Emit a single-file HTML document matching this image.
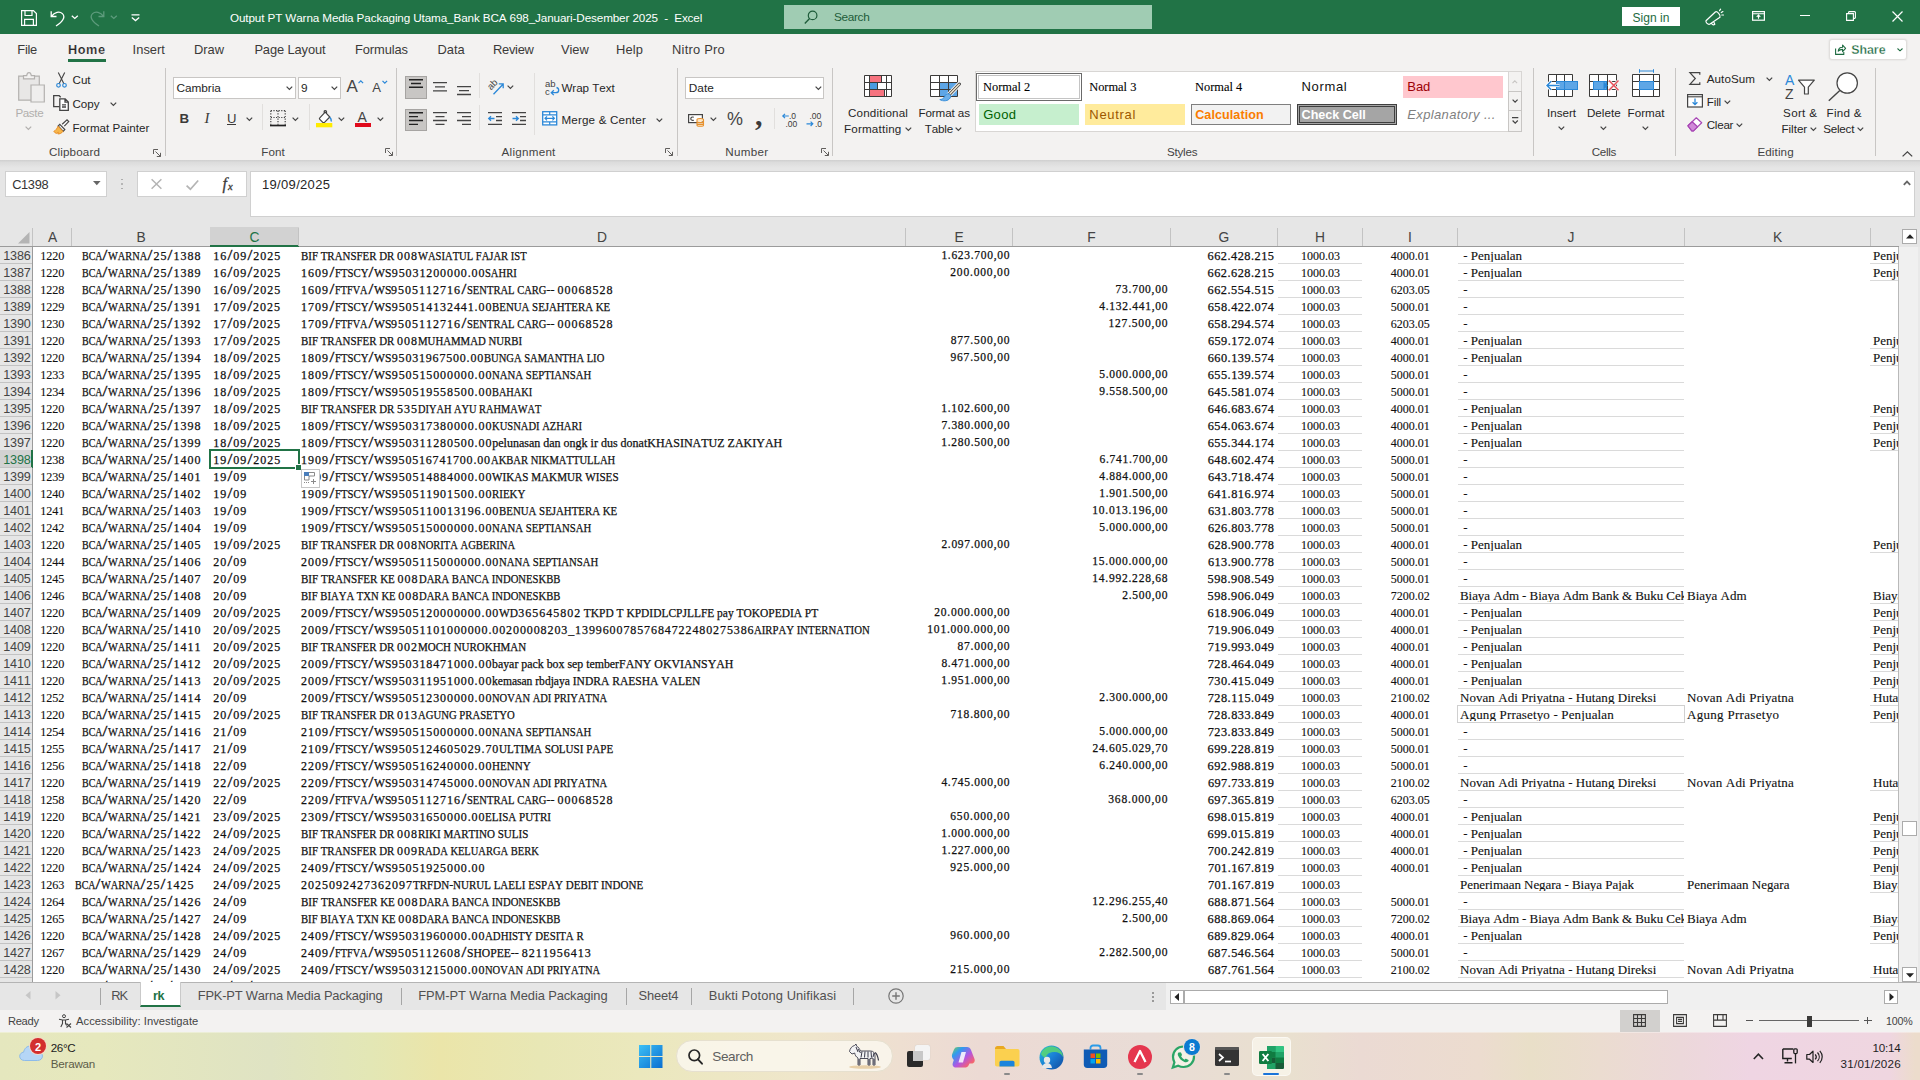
<!DOCTYPE html><html lang="en"><head><meta charset="utf-8"><title>Excel</title><style>
*{margin:0;padding:0;box-sizing:border-box}
html,body{width:1920px;height:1080px;overflow:hidden;background:#e6e6e6}
body{position:relative;font-family:"Liberation Sans",sans-serif;font-size:12px;color:#262626;font-kerning:none}
div,span,svg{position:absolute}
svg{overflow:visible}
span{white-space:pre;display:block}
i{font-style:normal}
b{font-weight:400;display:inline-block;text-align:center;transform:scale(1.45,1.28);transform-origin:50% 80%}
u{text-decoration:none;display:inline-block;transform-origin:0 50%}
#grid{left:0;top:247px;width:1899px;height:735px;background:#fff;overflow:hidden}
#grid span{font-family:"Liberation Serif",serif;color:#111;-webkit-text-stroke:0.25px #111}
#grid span.rh{font-family:"Liberation Sans",sans-serif;color:#444;-webkit-text-stroke:0}
#grid span.a{-webkit-text-stroke:0.1px #111}
#grid span.t{-webkit-text-stroke:0.12px #111}
.gl{background:#dadada;height:1px}
</style></head><body>
<div id="titlebar" style="left:0;top:0;width:1920px;height:34px;background:#217346">
<svg style="left:21px;top:10px;" width="16" height="16" viewBox="0 0 16 16"><path d="M.6.6h11.8l3 3v11.8H.6z M4 .6v4.9h7v-4.9 M3.6 15.4v-6h8.8v6" fill="none" stroke="#fff" stroke-width="1.2"/></svg>
<svg style="left:50px;top:9.5px;" width="16" height="17" viewBox="0 0 16 17"><path d="M1.2 1.2v5.3h5.3 M1.6 6.2C4.5 2 9.5.8 12.4 3.6c3.3 3.2.8 7.800-6.400 12.400" fill="none" stroke="#fff" stroke-width="1.3"/></svg>
<svg style="left:71px;top:15px;" width="8" height="5" viewBox="0 0 8 5"><path d="M.8.8l3 2.700 3-2.700" fill="none" stroke="#fff" stroke-width="1.3"/></svg>
<svg style="left:89px;top:9.5px;" width="16" height="17" viewBox="0 0 16 17"><path d="M14.800 1.2v5.3H9.500 M14.400 6.200C11.500 2 6.500.8 3.600 3.600.3 6.800 2.800 11.400 10 16" fill="none" stroke="#5d9b7c" stroke-width="1.3"/></svg>
<svg style="left:110px;top:15px;" width="8" height="5" viewBox="0 0 8 5"><path d="M.8.8l3 2.700 3-2.700" fill="none" stroke="#5d9b7c" stroke-width="1.3"/></svg>
<svg style="left:131px;top:13.5px;" width="9" height="8" viewBox="0 0 9 8"><path d="M.5.800h8 M.8 3.600l3.700 3 3.700-3" fill="none" stroke="#fff" stroke-width="1.3"/></svg>
<span style="left:230.0px;top:12.00px;font-size:11.7px;line-height:11.7px;letter-spacing:-0.12px;color:#fff;">Output PT Warna Media Packaging Utama_Bank BCA 698_Januari-Desember 2025  -  Excel</span>
<div style="left:784px;top:5px;width:368px;height:24px;background:#a0ccb3;"></div>
<svg style="left:804px;top:10px;" width="14" height="14" viewBox="0 0 14 14"><circle cx="8.600" cy="5.400" r="4.300" fill="none" stroke="#1e5c3a" stroke-width="1.2"/><path d="M5.600 8.600L.8 13.400" stroke="#1e5c3a" stroke-width="1.400"/></svg>
<span style="left:834.0px;top:12.00px;font-size:11.834px;line-height:11.834px;letter-spacing:-0.34px;color:#1e5c3a;">Search</span>
<div style="left:1622px;top:7px;width:58px;height:19px;background:#fff;"></div>
<span style="left:1632.6px;top:12.00px;font-size:12.028px;line-height:12.028px;letter-spacing:0.01px;color:#1e6b41;">Sign in</span>
<svg style="left:1705px;top:9px;" width="19" height="17" viewBox="0 0 19 17"><path d="M1 11.800L10.300 3C12 1.800 16 6 15 8.300L4.600 15.200C3 15.800.4 13.400 1 11.800z M6.600 14.200c.3 1.700 2 2.100 3.200 1.100l-.9-2 M14.600 1.700l1-1.500 M16.300 3.600l1.600-1 M16.800 6h1.700" fill="none" stroke="#fff" stroke-width="1.200" stroke-linejoin="round" stroke-linecap="round"/></svg>
<svg style="left:1752px;top:11.3px;" width="13" height="10" viewBox="0 0 13 10"><rect x=".6" y=".6" width="11.800" height="8.600" fill="none" stroke="#fff" stroke-width="1.2"/><path d="M.6 2.800h11.800 M6.500 7.800V4.200 M4.700 5.800l1.800-1.800 1.800 1.800" fill="none" stroke="#fff" stroke-width="1.100"/></svg>
<div style="left:1800px;top:15px;width:10px;height:1.3px;background:#fff;"></div>
<svg style="left:1846px;top:10.8px;" width="10" height="10" viewBox="0 0 10 10"><path d="M.6 2.600h6.800v6.800H.6z M2.600 2.600V1.400a.8.800 0 0 1 .8-.8h5.200a.8.800 0 0 1 .8.800v5.200a.8.800 0 0 1-.8.800H7.400" fill="none" stroke="#fff" stroke-width="1.100"/></svg>
<svg style="left:1891.5px;top:11.3px;" width="11" height="11" viewBox="0 0 11 11"><path d="M.5.500l10 10 M10.500.5l-10 10" stroke="#fff" stroke-width="1.200"/></svg>
</div>
<div id="tabs" style="left:0;top:34px;width:1920px;height:32px;background:#f3f2f1">
<span style="left:17.3px;top:10.00px;font-size:12.901px;line-height:12.901px;letter-spacing:-0.29px;color:#3b3a39;">File</span>
<span style="left:68.0px;top:10.00px;font-size:12.7px;line-height:12.7px;letter-spacing:0.58px;font-weight:700;color:#262626;-webkit-text-stroke:.2px #f3f2f1;">Home</span>
<span style="left:132.6px;top:10.00px;font-size:12.901px;line-height:12.901px;letter-spacing:0.02px;color:#3b3a39;">Insert</span>
<span style="left:194.0px;top:10.00px;font-size:12.901px;line-height:12.901px;letter-spacing:-0.03px;color:#3b3a39;">Draw</span>
<span style="left:254.4px;top:10.00px;font-size:12.901px;line-height:12.901px;letter-spacing:-0.12px;color:#3b3a39;">Page Layout</span>
<span style="left:355.0px;top:10.00px;font-size:12.901px;line-height:12.901px;letter-spacing:-0.11px;color:#3b3a39;">Formulas</span>
<span style="left:437.5px;top:10.00px;font-size:12.901px;line-height:12.901px;letter-spacing:-0.05px;color:#3b3a39;">Data</span>
<span style="left:493.0px;top:10.00px;font-size:12.901px;line-height:12.901px;letter-spacing:-0.29px;color:#3b3a39;">Review</span>
<span style="left:561.0px;top:10.00px;font-size:12.901px;line-height:12.901px;letter-spacing:-0.06px;color:#3b3a39;">View</span>
<span style="left:616.0px;top:10.00px;font-size:12.901px;line-height:12.901px;letter-spacing:0.14px;color:#3b3a39;">Help</span>
<span style="left:672.0px;top:10.00px;font-size:12.901px;line-height:12.901px;letter-spacing:0.23px;color:#3b3a39;">Nitro Pro</span>
<div style="left:68px;top:24.7px;width:38px;height:3px;background:#217346;"></div>
<div style="left:1828.5px;top:4.7px;width:78.5px;height:21.3px;background:#fff;border:1px solid #e1dfdd;border-radius:3px;box-shadow:0 0 2px rgba(0,0,0,.12)"></div>
<svg style="left:1835px;top:10px;" width="11" height="11" viewBox="0 0 11 11"><path d="M.6 4.500v5.900h8.200V8 M3.200 7.200c.3-2.500 2-3.900 4.400-3.900V1l3 3.300-3 3.300V5.400c-1.900 0-3.300.5-4.400 1.800z" fill="none" stroke="#1e6b41" stroke-width="1.100" stroke-linejoin="round"/></svg>
<span style="left:1851.3px;top:10.00px;font-size:12.4px;line-height:12.4px;letter-spacing:-0.05px;font-weight:700;color:#1e6b41;-webkit-text-stroke:.3px #fff;">Share</span>
<svg style="left:1896.5px;top:14px;" width="6" height="4" viewBox="0 0 6 4"><path d="M.5.500l2.500 2.300L5.500.5" fill="none" stroke="#1e6b41" stroke-width="1.100"/></svg>
</div>
<div id="ribbon" style="left:0;top:66px;width:1920px;height:94px;background:#f3f2f1">
<div style="left:164.5px;top:2px;width:1px;height:88px;background:#c8c6c4;"></div>
<div style="left:396.3px;top:2px;width:1px;height:88px;background:#c8c6c4;"></div>
<div style="left:676.7px;top:2px;width:1px;height:88px;background:#c8c6c4;"></div>
<div style="left:832.3px;top:2px;width:1px;height:88px;background:#c8c6c4;"></div>
<div style="left:1532.5px;top:2px;width:1px;height:88px;background:#c8c6c4;"></div>
<div style="left:1675.4px;top:2px;width:1px;height:88px;background:#c8c6c4;"></div>
<div style="left:1875.3px;top:2px;width:1px;height:88px;background:#c8c6c4;"></div>
<div style="left:262px;top:38px;width:1px;height:26px;background:#e1dfdd;"></div>
<div style="left:308.8px;top:38px;width:1px;height:26px;background:#e1dfdd;"></div>
<div style="left:479.4px;top:7px;width:1px;height:25px;background:#e1dfdd;"></div>
<div style="left:479.4px;top:39px;width:1px;height:25px;background:#e1dfdd;"></div>
<div style="left:534.2px;top:7px;width:1px;height:62px;background:#e1dfdd;"></div>
<div style="left:774.4px;top:42px;width:1px;height:21px;background:#e1dfdd;"></div>
<svg style="left:18px;top:5.5px;" width="27" height="31" viewBox="0 0 27 31"><path d="M.7 4.200h20.600v24H.7z" fill="#e8e7e6" stroke="#b3b1af" stroke-width="1.200"/><path d="M5.500 6.800V3.600h3.200C9 1.800 9.900.700 11 .7s2 1.100 2.300 2.900h3.200v3.200z" fill="#f3f2f1" stroke="#b3b1af" stroke-width="1.200"/><path d="M13 13h13.300v17H13z" fill="#efeeed" stroke="#b3b1af" stroke-width="1.200"/></svg>
<span style="left:15.4px;top:41.00px;font-size:11.64px;line-height:11.64px;letter-spacing:-0.37px;color:#b1afad;">Paste</span>
<svg style="left:25px;top:60px;" width="6.8" height="4" viewBox="0 0 6.8 4"><path d="M.6.6l2.8 2.8 2.8-2.8" fill="none" stroke="#b1afad" stroke-width="1.2"/></svg>
<svg style="left:56px;top:5.5px;" width="11" height="16" viewBox="0 0 11 16"><path d="M2.300.4l5.600 11.300 M8.700.4L3.100 11.700" stroke="#444" stroke-width="1.100" fill="none"/><circle cx="2.500" cy="13.300" r="1.800" fill="none" stroke="#2b88d8" stroke-width="1.200"/><circle cx="8.500" cy="13.300" r="1.800" fill="none" stroke="#2b88d8" stroke-width="1.200"/></svg>
<span style="left:72.5px;top:8.00px;font-size:11.64px;line-height:11.64px;letter-spacing:-0.02px;">Cut</span>
<svg style="left:53px;top:29.3px;" width="16" height="16" viewBox="0 0 16 16"><path d="M6.600 11.600H.7V.700h5.500l1.500 1.500" fill="none" stroke="#444" stroke-width="1.300"/><path d="M6.800 3.800h5.400l3.100 3.100v8.400H6.800z M12 3.900v3.200h3.200 M9 9.800h4 M9 12h4" fill="#fff" stroke="#444" stroke-width="1.300"/></svg>
<span style="left:72.5px;top:32.00px;font-size:11.64px;line-height:11.64px;letter-spacing:-0.04px;">Copy</span>
<svg style="left:110.1px;top:35.6px;" width="6.8" height="4" viewBox="0 0 6.8 4"><path d="M.6.6l2.8 2.8 2.8-2.8" fill="none" stroke="#444" stroke-width="1.2"/></svg>
<svg style="left:53px;top:53px;" width="17" height="16" viewBox="0 0 17 16"><path d="M9.200 5.200L14 .8l1.700 1.800-4.400 4.600" fill="#fff" stroke="#444" stroke-width="1.200"/><path d="M6.800 5.400l5 5.200-1.600 1.700-5-5.300z" fill="#fff" stroke="#444" stroke-width="1.200"/><path d="M5 7.200l5 5.200c-1.500 2-3.600 2.700-5.200 2.500l.6-1.700-2 1.200c-1.200-.4-2-1.100-2.600-2 2-1 3.300-2.800 4.200-5.200z" fill="#f7b64a" stroke="#e8912d" stroke-width="1"/></svg>
<span style="left:72.5px;top:56.00px;font-size:11.64px;line-height:11.64px;">Format Painter</span>
<span style="left:49.0px;top:80.00px;font-size:11.64px;line-height:11.64px;letter-spacing:0.14px;color:#444;">Clipboard</span>
<svg style="left:153px;top:82.5px;" width="8" height="8" viewBox="0 0 8 8"><path d="M.5 5V.5H5 M2.500 2.500l5 5 M7.500 3.800v3.700H3.800" fill="none" stroke="#605e5c" stroke-width="1"/></svg>
<div style="left:173px;top:10.5px;width:123px;height:22px;background:#fff;border:1px solid #c8c6c4;"></div>
<span style="left:176.5px;top:17.00px;font-size:11.834px;line-height:11.834px;letter-spacing:-0.06px;">Cambria</span>
<svg style="left:285.8px;top:20.3px;" width="6.8" height="4" viewBox="0 0 6.8 4"><path d="M.6.6l2.8 2.8 2.8-2.8" fill="none" stroke="#444" stroke-width="1.2"/></svg>
<div style="left:298.4px;top:10.5px;width:42.2px;height:22px;background:#fff;border:1px solid #c8c6c4;"></div>
<span style="left:301.0px;top:17.00px;font-size:11.834px;line-height:11.834px;letter-spacing:-0.08px;">9</span>
<svg style="left:330.9px;top:20.3px;" width="6.8" height="4" viewBox="0 0 6.8 4"><path d="M.6.6l2.8 2.8 2.8-2.8" fill="none" stroke="#444" stroke-width="1.2"/></svg>
<span style="left:346.5px;top:13.00px;font-size:16.975px;line-height:16.975px;letter-spacing:-0.17px;color:#444;">A</span>
<svg style="left:357.5px;top:14px;" width="6" height="4" viewBox="0 0 6 4"><path d="M.5 3.200L2.800.8l2.300 2.400" fill="none" stroke="#2b88d8" stroke-width="1.200"/></svg>
<span style="left:372.3px;top:15.00px;font-size:13.095px;line-height:13.095px;letter-spacing:-0.13px;color:#444;">A</span>
<svg style="left:381.5px;top:14px;" width="6" height="4" viewBox="0 0 6 4"><path d="M.5.800l2.300 2.400L5.100.8" fill="none" stroke="#2b88d8" stroke-width="1.200"/></svg>
<span style="left:179.5px;top:46.00px;font-size:13.3px;line-height:13.3px;letter-spacing:-1.68px;font-weight:700;color:#3b3a39;">B</span>
<span style="left:204.5px;top:45.00px;font-size:15px;line-height:15px;font-family:'Liberation Serif',serif;color:#3b3a39;font-style:italic;">I</span>
<span style="left:227.0px;top:46.00px;font-size:13.095px;line-height:13.095px;letter-spacing:-0.29px;color:#3b3a39;">U</span>
<div style="left:227.3px;top:58.2px;width:9px;height:1.2px;background:#3b3a39;"></div>
<svg style="left:246.1px;top:51.3px;" width="6.8" height="4" viewBox="0 0 6.8 4"><path d="M.6.6l2.8 2.8 2.8-2.8" fill="none" stroke="#444" stroke-width="1.2"/></svg>
<svg style="left:270px;top:44.4px;" width="16" height="17" viewBox="0 0 16 17"><path d="M.8.700h14.400 M.8 7.500h14.400 M.8.700v14 M8 .7v14 M15.200.7v14" fill="none" stroke="#444" stroke-width="1.200" stroke-dasharray="1.200 1.400"/><path d="M0 15.500h16" stroke="#222" stroke-width="1.700"/></svg>
<svg style="left:292px;top:51.3px;" width="6.8" height="4" viewBox="0 0 6.8 4"><path d="M.6.6l2.8 2.8 2.8-2.8" fill="none" stroke="#444" stroke-width="1.2"/></svg>
<svg style="left:316px;top:44px;" width="17" height="18" viewBox="0 0 17 18"><path d="M3.800 7.800L9.200 2.200l4.600 4.800-5.300 5.300c-.5.500-1.200.5-1.700 0L3.800 9.400c-.5-.500-.5-1.100 0-1.600z M8.200 3.200V1.600c0-1.500 2.300-1.500 2.300 0v2" fill="#fff" stroke="#444" stroke-width="1.200"/><path d="M14 7.500c1.300 1.500 1.600 2.600 1.200 4" fill="none" stroke="#2b88d8" stroke-width="1.500"/><rect x="0" y="13" width="16.300" height="4.300" fill="#ffeb00"/></svg>
<svg style="left:337.8px;top:51.3px;" width="6.8" height="4" viewBox="0 0 6.8 4"><path d="M.6.6l2.8 2.8 2.8-2.8" fill="none" stroke="#444" stroke-width="1.2"/></svg>
<span style="left:357.5px;top:44.00px;font-size:14.065px;line-height:14.065px;letter-spacing:-0.14px;color:#444;">A</span>
<div style="left:355px;top:56.9px;width:16px;height:4.2px;background:#e00b1c;"></div>
<svg style="left:377.2px;top:51.3px;" width="6.8" height="4" viewBox="0 0 6.8 4"><path d="M.6.6l2.8 2.8 2.8-2.8" fill="none" stroke="#444" stroke-width="1.2"/></svg>
<span style="left:261.3px;top:80.00px;font-size:11.64px;line-height:11.64px;letter-spacing:0.04px;color:#444;">Font</span>
<svg style="left:385px;top:82.3px;" width="8" height="8" viewBox="0 0 8 8"><path d="M.5 5V.5H5 M2.500 2.500l5 5 M7.500 3.800v3.700H3.800" fill="none" stroke="#605e5c" stroke-width="1"/></svg>
<div style="left:405px;top:10.3px;width:22.2px;height:22.3px;background:#c8c6c4;border:1px solid #a6a4a2;"></div>
<div style="left:405px;top:42.6px;width:22.2px;height:22.3px;background:#c8c6c4;border:1px solid #a6a4a2;"></div>
<svg style="left:409px;top:13px;" width="14" height="12.4" viewBox="0 0 14 12.4"><path d="M0 0.7h14 M2 4.5h10 M0 8.3h14 " stroke="#222" stroke-width="1.4" fill="none"/></svg>
<svg style="left:433px;top:15.7px;" width="14" height="13.3" viewBox="0 0 14 13.3"><path d="M0 0.7h14 M2 4.8h10 M0 8.9h14 " stroke="#444" stroke-width="1.3" fill="none"/></svg>
<svg style="left:457px;top:19.8px;" width="14" height="12.7" viewBox="0 0 14 12.7"><path d="M0 0.7h14 M2 4.6h10 M0 8.5h14 " stroke="#444" stroke-width="1.3" fill="none"/></svg>
<svg style="left:409px;top:46.2px;" width="14" height="16.6" viewBox="0 0 14 16.6"><path d="M0 0.7h14 M0 4.6h9 M0 8.5h14 M0 12.4h9 " stroke="#222" stroke-width="1.4" fill="none"/></svg>
<svg style="left:433px;top:46.2px;" width="14" height="16.6" viewBox="0 0 14 16.6"><path d="M0 0.7h14 M2.5 4.6h9 M0 8.5h14 M2.5 12.4h9 " stroke="#444" stroke-width="1.3" fill="none"/></svg>
<svg style="left:457px;top:46.2px;" width="14" height="16.6" viewBox="0 0 14 16.6"><path d="M0 0.7h14 M5 4.6h9 M0 8.5h14 M5 12.4h9 " stroke="#444" stroke-width="1.3" fill="none"/></svg>
<svg style="left:486.5px;top:12.5px;" width="18" height="16" viewBox="0 0 18 16"><text x="2" y="9" font-size="9.500" fill="#444" transform="rotate(-45 6 8)" font-family="Liberation Sans,sans-serif">ab</text><path d="M6.500 15.200L16 5.200 M11.800 4.800h4.400v4.400" fill="none" stroke="#2b88d8" stroke-width="1.300"/></svg>
<svg style="left:507.3px;top:19.2px;" width="6.8" height="4" viewBox="0 0 6.8 4"><path d="M.6.6l2.8 2.8 2.8-2.8" fill="none" stroke="#444" stroke-width="1.2"/></svg>
<svg style="left:544.5px;top:13.5px;" width="15" height="16" viewBox="0 0 15 16"><text x="0" y="7" font-size="9.500" fill="#444" font-family="Liberation Sans,sans-serif">ab</text><text x="0" y="15" font-size="9.500" fill="#444" font-family="Liberation Sans,sans-serif">c</text><path d="M11.500 7.500c3 .8 3 5.200-.5 5.200H6.500 M8.800 10.300l-2.500 2.400 2.500 2.400" fill="none" stroke="#2b88d8" stroke-width="1.300"/></svg>
<span style="left:561.4px;top:16.00px;font-size:11.64px;line-height:11.64px;letter-spacing:-0.04px;">Wrap Text</span>
<svg style="left:487.8px;top:46px;" width="15" height="14" viewBox="0 0 15 14"><path d="M0 .7h14 M8 4.600h6 M8 8.500h6 M0 12.400h14" stroke="#444" stroke-width="1.300"/><path d="M6.500 6.500H.8 M3 4.200L.7 6.500 3 8.800" fill="none" stroke="#2b88d8" stroke-width="1.300"/></svg>
<svg style="left:511.6px;top:46px;" width="15" height="14" viewBox="0 0 15 14"><path d="M0 .7h14 M8 4.600h6 M8 8.500h6 M0 12.400h14" stroke="#444" stroke-width="1.300"/><path d="M.5 6.500h5.700 M4 4.200l2.300 2.300L4 8.800" fill="none" stroke="#2b88d8" stroke-width="1.300"/></svg>
<svg style="left:541.8px;top:45.3px;" width="16" height="15" viewBox="0 0 16 15"><rect x=".7" y=".7" width="14" height="13.200" fill="#fff" stroke="#2b88d8" stroke-width="1.300"/><path d="M.7 3.800h14 M.7 10.800h14 M7.700.7v3 M7.700 10.800v3" stroke="#2b88d8" stroke-width="1.200"/><path d="M3 7.300h9.400 M5 5.300l-2 2 2 2 M10.400 5.300l2 2-2 2" fill="none" stroke="#2b88d8" stroke-width="1.200"/></svg>
<span style="left:561.4px;top:48.00px;font-size:11.64px;line-height:11.64px;letter-spacing:0.18px;">Merge &amp; Center</span>
<svg style="left:656.2px;top:51.5px;" width="6.8" height="4" viewBox="0 0 6.8 4"><path d="M.6.6l2.8 2.8 2.8-2.8" fill="none" stroke="#444" stroke-width="1.2"/></svg>
<span style="left:501.5px;top:80.00px;font-size:11.64px;line-height:11.64px;letter-spacing:0.27px;color:#444;">Alignment</span>
<svg style="left:665px;top:82.3px;" width="8" height="8" viewBox="0 0 8 8"><path d="M.5 5V.5H5 M2.500 2.500l5 5 M7.500 3.800v3.700H3.800" fill="none" stroke="#605e5c" stroke-width="1"/></svg>
<div style="left:685.4px;top:10.5px;width:139px;height:22px;background:#fff;border:1px solid #c8c6c4;"></div>
<span style="left:688.8px;top:17.00px;font-size:11.834px;line-height:11.834px;letter-spacing:-0.01px;">Date</span>
<svg style="left:815px;top:20.3px;" width="6.8" height="4" viewBox="0 0 6.8 4"><path d="M.6.6l2.8 2.8 2.8-2.8" fill="none" stroke="#444" stroke-width="1.2"/></svg>
<svg style="left:688px;top:47.7px;" width="17" height="13" viewBox="0 0 17 13"><rect x=".6" y=".6" width="13.800" height="8" fill="#fff" stroke="#444" stroke-width="1.200"/><path d="M5.800 3.200c-1.800-.6-3 .2-3 1.500s1.200 2 3 1.500" fill="none" stroke="#444" stroke-width="1.100"/><path d="M9 5.500c0-1.400 6.500-1.400 6.500 0v5.700c0 1.400-6.500 1.400-6.500 0z M9 7.500c0 1.300 6.500 1.300 6.500 0 M9 9.400c0 1.300 6.500 1.300 6.500 0" fill="#fde6c4" stroke="#e8912d" stroke-width="1.100"/></svg>
<svg style="left:710.1px;top:51.3px;" width="6.8" height="4" viewBox="0 0 6.8 4"><path d="M.6.6l2.8 2.8 2.8-2.8" fill="none" stroke="#444" stroke-width="1.2"/></svg>
<span style="left:727.0px;top:45.00px;font-size:17.945px;line-height:17.945px;letter-spacing:-1.00px;color:#444;">%</span>
<span style="left:755.0px;top:34.00px;font-size:30px;line-height:30px;font-family:'Liberation Serif',serif;font-weight:700;color:#3b3a39;">,</span>
<svg style="left:782px;top:45.5px;" width="16" height="16" viewBox="0 0 16 16"><text x="7" y="7" font-size="8.500" fill="#3b3a39" font-family="Liberation Sans,sans-serif">.0</text><text x="3.500" y="14.800" font-size="8.500" fill="#3b3a39" font-family="Liberation Sans,sans-serif">.00</text><path d="M6.800 4H.8 M3 1.800L.8 4 3 6.200" fill="none" stroke="#2b88d8" stroke-width="1.200"/></svg>
<svg style="left:805.5px;top:45.5px;" width="17" height="16" viewBox="0 0 17 16"><text x="3.500" y="7" font-size="8.500" fill="#3b3a39" font-family="Liberation Sans,sans-serif">.00</text><text x="9" y="14.800" font-size="8.500" fill="#3b3a39" font-family="Liberation Sans,sans-serif">.0</text><path d="M.5 11.800h6.300 M4.600 9.600l2.200 2.200-2.200 2.200" fill="none" stroke="#2b88d8" stroke-width="1.200"/></svg>
<span style="left:725.3px;top:80.00px;font-size:11.64px;line-height:11.64px;letter-spacing:0.28px;color:#444;">Number</span>
<svg style="left:821px;top:82.3px;" width="8" height="8" viewBox="0 0 8 8"><path d="M.5 5V.5H5 M2.500 2.500l5 5 M7.500 3.800v3.700H3.800" fill="none" stroke="#605e5c" stroke-width="1"/></svg>
<svg style="left:864px;top:9px;" width="28" height="22" viewBox="0 0 28 22"><rect x=".5" y=".5" width="27" height="21" fill="#fff"/><rect x="5.500" y=".5" width="12" height="7" fill="#f6737f"/><rect x="5.500" y="7.500" width="8" height="7" fill="#4a9be0"/><rect x="5.500" y="14.500" width="15" height="7" fill="#f6737f"/><path d="M.5.500h27v21H.5z M.5 7.500h27 M.5 14.500h27 M5.500.5v21 M22.500.5v21 M17.500.5v7 M13.500 7.500v7 M20.500 14.500v7" fill="none" stroke="#3b3a39" stroke-width="1"/></svg>
<span style="left:847.9px;top:41.00px;font-size:11.64px;line-height:11.64px;letter-spacing:0.19px;">Conditional</span>
<span style="left:843.9px;top:57.00px;font-size:11.64px;line-height:11.64px;letter-spacing:0.21px;">Formatting</span>
<svg style="left:905.1px;top:60.6px;" width="6.8" height="4" viewBox="0 0 6.8 4"><path d="M.6.6l2.8 2.8 2.8-2.8" fill="none" stroke="#444" stroke-width="1.2"/></svg>
<svg style="left:930px;top:9px;" width="31" height="27" viewBox="0 0 31 27"><rect x=".5" y=".5" width="27" height="21" fill="#fff"/><rect x="9.500" y="7.500" width="18" height="14" fill="#5ea6e6"/><path d="M.5.500h27v21H.5z M.5 7.500h27 M.5 14.500h27 M9.500.5v21 M18.500.5v21" fill="none" stroke="#3b3a39" stroke-width="1"/><path d="M29.500 9L18.300 20.600" stroke="#f3f2f1" stroke-width="5" stroke-linecap="round"/><path d="M29.500 9L18.300 20.600" stroke="#444" stroke-width="3" stroke-linecap="round"/><path d="M29.300 9.200L18.600 20.300" stroke="#f6ead2" stroke-width="1.400" stroke-linecap="round"/><path d="M19.300 19c-2.600-.8-4.300.8-4.800 2.800-.7 1.600-2.400 2.600-4.700 2.800 3.200 1.900 8.400 1.700 10.400-1.700.8-1.500.6-3-.9-3.900z" fill="#6db0ea" stroke="#2b88d8" stroke-width=".9"/></svg>
<span style="left:918.5px;top:41.00px;font-size:11.64px;line-height:11.64px;letter-spacing:-0.11px;">Format as</span>
<span style="left:924.8px;top:57.00px;font-size:11.64px;line-height:11.64px;letter-spacing:-0.17px;">Table</span>
<svg style="left:955.1px;top:60.6px;" width="6.8" height="4" viewBox="0 0 6.8 4"><path d="M.6.6l2.8 2.8 2.8-2.8" fill="none" stroke="#444" stroke-width="1.2"/></svg>
<div style="left:974.7px;top:4.7px;width:547px;height:61px;background:#fff;border:1px solid #d8d6d4;"></div>
<div style="left:976.3px;top:7.3px;width:105.5px;height:27.5px;background:#fff;border:1px solid #6a6a6a;box-shadow:inset 0 0 0 1px #fff,inset 0 0 0 2px #c4c4c4;"></div>
<span style="left:983.0px;top:15.00px;font-size:12.4px;line-height:12.4px;font-family:'Liberation Serif',serif;color:#000;-webkit-text-stroke:.1px #000;">Normal 2</span>
<span style="left:1089.2px;top:15.00px;font-size:12.4px;line-height:12.4px;font-family:'Liberation Serif',serif;color:#000;-webkit-text-stroke:.1px #000;">Normal 3</span>
<span style="left:1195.0px;top:15.00px;font-size:12.4px;line-height:12.4px;font-family:'Liberation Serif',serif;color:#000;-webkit-text-stroke:.1px #000;">Normal 4</span>
<span style="left:1301.5px;top:14.00px;font-size:13px;line-height:13px;letter-spacing:0.65px;color:#111;">Normal</span>
<div style="left:1403px;top:10.3px;width:100px;height:21.4px;background:#ffc7ce;"></div>
<span style="left:1407.3px;top:14.00px;font-size:13px;line-height:13px;letter-spacing:-0.04px;color:#9c0006;">Bad</span>
<div style="left:979.2px;top:38.3px;width:99.5px;height:21px;background:#c6efce;"></div>
<span style="left:983.2px;top:42.00px;font-size:13px;line-height:13px;letter-spacing:0.30px;color:#006100;">Good</span>
<div style="left:1085.3px;top:38.3px;width:99.5px;height:21px;background:#ffeb9c;"></div>
<span style="left:1089.3px;top:42.00px;font-size:13px;line-height:13px;letter-spacing:0.70px;color:#9c5700;">Neutral</span>
<div style="left:1191.3px;top:38.3px;width:99.5px;height:21.2px;background:#f2f2f2;border:1px solid #7f7f7f;"></div>
<span style="left:1195.2px;top:43.00px;font-size:12.6px;line-height:12.6px;letter-spacing:0.06px;font-weight:700;color:#fa7d00;">Calculation</span>
<div style="left:1297.2px;top:38.3px;width:99.5px;height:21.2px;background:#a5a5a5;border:1px solid #3f3f3f;box-shadow:inset 0 0 0 1px #a5a5a5,inset 0 0 0 2px #3f3f3f;"></div>
<span style="left:1301.6px;top:43.00px;font-size:12.6px;line-height:12.6px;letter-spacing:-0.04px;font-weight:700;color:#fff;">Check Cell</span>
<span style="left:1407.3px;top:42.00px;font-size:13px;line-height:13px;letter-spacing:0.36px;font-style:italic;color:#7f7f7f;">Explanatory ...</span>
<div style="left:1507.5px;top:4.7px;width:14.2px;height:21px;background:#f3f2f1;border:1px solid #d8d6d4;"></div>
<div style="left:1507.5px;top:25.2px;width:14.2px;height:19.5px;background:#f3f2f1;border:1px solid #c8c6c4;"></div>
<div style="left:1507.5px;top:44.2px;width:14.2px;height:21.5px;background:#f3f2f1;border:1px solid #c8c6c4;"></div>
<svg style="left:1511.7px;top:13.5px;" width="6" height="4" viewBox="0 0 6 4"><path d="M.5 3.200L2.800.8l2.300 2.400" fill="none" stroke="#c8c6c4" stroke-width="1.100"/></svg>
<svg style="left:1511.5px;top:32.75px;" width="6.2" height="3.7" viewBox="0 0 6.2 3.7"><path d="M.6.6l2.5 2.5 2.5-2.5" fill="none" stroke="#444" stroke-width="1.2"/></svg>
<svg style="left:1511.5px;top:50.5px;" width="7" height="8" viewBox="0 0 7 8"><path d="M0 .6h6.300 M.6 3.500l2.600 2.600 2.600-2.600" fill="none" stroke="#444" stroke-width="1.200"/></svg>
<span style="left:1167.1px;top:80.00px;font-size:11.64px;line-height:11.64px;letter-spacing:-0.26px;color:#444;">Styles</span>
<svg style="left:1546px;top:8px;" width="32" height="23" viewBox="0 0 32 23"><rect x="2.500" y=".5" width="24" height="22" fill="#fff"/><path d="M2.500.5h24v22h-24z M2.500 7.500h24 M2.500 15.500h24 M10.500.5v22 M18.500.5v22" fill="none" stroke="#3b3a39" stroke-width="1"/><rect x="10.500" y="7.500" width="21" height="8" fill="#5ea6e6" stroke="#2b88d8" stroke-width="1"/><path d="M18.500 7.500v8" stroke="#2b88d8" stroke-width="1"/><path d="M13.500 11.500H1 M5.200 7.200L1 11.500l4.200 4.300" fill="none" stroke="#fff" stroke-width="3.200"/><path d="M13.500 11.500H1 M5.200 7.200L1 11.500l4.200 4.300" fill="none" stroke="#2b88d8" stroke-width="1.400"/></svg>
<svg style="left:1589px;top:8px;" width="31" height="23" viewBox="0 0 31 23"><rect x=".5" y=".5" width="27" height="22" fill="#fff"/><path d="M.5.500h27v22H.5z M.5 7.500h27 M.5 15.500h27 M9.500.5v22 M18.500.5v22" fill="none" stroke="#3b3a39" stroke-width="1"/><rect x="4.500" y="7.500" width="13" height="8" fill="#5ea6e6" stroke="#2b88d8" stroke-width="1"/><path d="M14.500 7.500l4.500 4-4.500 4z" fill="#2b88d8"/><path d="M20 6.500l9.500 9.800 M29.500 6.500L20 16.300" stroke="#f3f2f1" stroke-width="3"/><path d="M20 6.500l9.500 9.800 M29.500 6.500L20 16.300" stroke="#e8505b" stroke-width="1.400"/></svg>
<svg style="left:1632px;top:3px;" width="29" height="28" viewBox="0 0 29 28"><path d="M7.500 2h14 M7.500 .2v3.600 M21.500 .2v3.600" stroke="#2b88d8" stroke-width="1" fill="none"/><rect x=".5" y="5.500" width="27" height="22" fill="#fff"/><path d="M.5 5.500h27v22H.5z M.5 12.500h27 M.5 20.500h27 M7.500 5.500v22 M21.500 5.500v22" fill="none" stroke="#3b3a39" stroke-width="1"/><rect x="7.500" y="12.500" width="14" height="8" fill="#5ea6e6" stroke="#2b88d8" stroke-width="1"/></svg>
<span style="left:1546.9px;top:41.00px;font-size:11.64px;line-height:11.64px;letter-spacing:0.02px;">Insert</span>
<span style="left:1586.9px;top:41.00px;font-size:11.64px;line-height:11.64px;letter-spacing:0.03px;">Delete</span>
<span style="left:1627.5px;top:41.00px;font-size:11.64px;line-height:11.64px;letter-spacing:0.04px;">Format</span>
<svg style="left:1557.8px;top:60.2px;" width="6.8" height="4" viewBox="0 0 6.8 4"><path d="M.6.6l2.8 2.8 2.8-2.8" fill="none" stroke="#444" stroke-width="1.2"/></svg>
<svg style="left:1600.1px;top:60.2px;" width="6.8" height="4" viewBox="0 0 6.8 4"><path d="M.6.6l2.8 2.8 2.8-2.8" fill="none" stroke="#444" stroke-width="1.2"/></svg>
<svg style="left:1642.1px;top:60.2px;" width="6.8" height="4" viewBox="0 0 6.8 4"><path d="M.6.6l2.8 2.8 2.8-2.8" fill="none" stroke="#444" stroke-width="1.2"/></svg>
<span style="left:1591.7px;top:80.00px;font-size:11.64px;line-height:11.64px;letter-spacing:-0.31px;color:#444;">Cells</span>
<svg style="left:1689px;top:6px;" width="12" height="13" viewBox="0 0 12 13"><path d="M10.800 2.800V.7H.9l5.400 5.800L.9 12.300h9.900v-2.100" fill="none" stroke="#444" stroke-width="1.200"/></svg>
<span style="left:1706.7px;top:7.00px;font-size:11.64px;line-height:11.64px;letter-spacing:0.09px;">AutoSum</span>
<svg style="left:1766.2px;top:10.5px;" width="6.8" height="4" viewBox="0 0 6.8 4"><path d="M.6.6l2.8 2.8 2.8-2.8" fill="none" stroke="#444" stroke-width="1.2"/></svg>
<svg style="left:1686.8px;top:28.4px;" width="16" height="14" viewBox="0 0 16 14"><rect x=".6" y=".6" width="14.800" height="12.400" fill="#fff" stroke="#444" stroke-width="1.200"/><path d="M.6 2.800h14.800" stroke="#444" stroke-width="1.100"/><path d="M8 4.500v6 M5.600 8.200L8 10.600l2.400-2.400" fill="none" stroke="#2b88d8" stroke-width="1.300"/></svg>
<span style="left:1706.7px;top:30.00px;font-size:11.64px;line-height:11.64px;letter-spacing:-0.12px;">Fill</span>
<svg style="left:1724.1px;top:33.8px;" width="6.8" height="4" viewBox="0 0 6.8 4"><path d="M.6.6l2.8 2.8 2.8-2.8" fill="none" stroke="#444" stroke-width="1.2"/></svg>
<svg style="left:1687.4px;top:50.8px;" width="16" height="15" viewBox="0 0 16 15"><path d="M1 8.800L9.300.8l5.400 5-8.300 8.100H4.800z" fill="#fff" stroke="#a846b5" stroke-width="1.200" stroke-linejoin="round"/><path d="M1 8.800l4.200-4 5.300 5-4 4H4.800z" fill="#d08ad8" stroke="#a846b5" stroke-width="1.200" stroke-linejoin="round"/></svg>
<span style="left:1706.7px;top:53.00px;font-size:11.64px;line-height:11.64px;letter-spacing:-0.25px;">Clear</span>
<svg style="left:1736.1px;top:57px;" width="6.8" height="4" viewBox="0 0 6.8 4"><path d="M.6.6l2.8 2.8 2.8-2.8" fill="none" stroke="#444" stroke-width="1.2"/></svg>
<svg style="left:1785px;top:6.5px;" width="30" height="28" viewBox="0 0 30 28"><text x="0" y="11.500" font-size="14" fill="#2b88d8" font-family="Liberation Sans,sans-serif">A</text><text x="0" y="26" font-size="14" fill="#444" font-family="Liberation Sans,sans-serif">Z</text><path d="M13.500 7.200h15.800l-6 7v6.800h-3.800v-6.800z" fill="#fff" stroke="#444" stroke-width="1.200" stroke-linejoin="round"/></svg>
<span style="left:1783.1px;top:41.00px;font-size:11.64px;line-height:11.64px;letter-spacing:0.30px;">Sort &amp;</span>
<span style="left:1781.4px;top:57.00px;font-size:11.64px;line-height:11.64px;">Filter</span>
<svg style="left:1810.2px;top:60.6px;" width="6.8" height="4" viewBox="0 0 6.8 4"><path d="M.6.6l2.8 2.8 2.8-2.8" fill="none" stroke="#444" stroke-width="1.2"/></svg>
<svg style="left:1828px;top:5.5px;" width="31" height="30" viewBox="0 0 31 30"><circle cx="19.200" cy="11" r="10.200" fill="#fff" stroke="#444" stroke-width="1.200"/><path d="M11.800 18.400L.8 28.800" stroke="#444" stroke-width="1.400"/></svg>
<span style="left:1826.6px;top:41.00px;font-size:11.64px;line-height:11.64px;letter-spacing:0.24px;">Find &amp;</span>
<span style="left:1823.2px;top:57.00px;font-size:11.64px;line-height:11.64px;letter-spacing:-0.21px;">Select</span>
<svg style="left:1857.4px;top:60.6px;" width="6.8" height="4" viewBox="0 0 6.8 4"><path d="M.6.6l2.8 2.8 2.8-2.8" fill="none" stroke="#444" stroke-width="1.2"/></svg>
<span style="left:1757.4px;top:80.00px;font-size:11.64px;line-height:11.64px;letter-spacing:0.12px;color:#444;">Editing</span>
<svg style="left:1901.5px;top:85px;" width="11" height="6" viewBox="0 0 11 6"><path d="M.6 5.400l4.800-4.600 4.800 4.600" fill="none" stroke="#444" stroke-width="1.300"/></svg>
</div>
<div style="left:0px;top:160px;width:1920px;height:8px;background:linear-gradient(#cfcfcf,#dcdcdc 30%,#e6e6e6)"></div>
<div style="left:5px;top:171px;width:102px;height:26px;background:#fff;border:1px solid #d0d0d0;"></div>
<span style="left:12.2px;top:179.00px;font-size:12.8px;line-height:12.8px;letter-spacing:-0.34px;color:#333;">C1398</span>
<svg style="left:92.8px;top:181.3px;" width="8" height="5" viewBox="0 0 8 5"><path d="M0 0h7.600L3.800 4.200z" fill="#666"/></svg>
<div style="left:121.2px;top:178.6px;width:1.6px;height:1.6px;background:#a6a6a6;border-radius:1px"></div>
<div style="left:121.2px;top:183.2px;width:1.6px;height:1.6px;background:#a6a6a6;border-radius:1px"></div>
<div style="left:121.2px;top:187.8px;width:1.6px;height:1.6px;background:#a6a6a6;border-radius:1px"></div>
<div style="left:137px;top:171px;width:110px;height:26px;background:#fff;border:1px solid #d0d0d0;"></div>
<svg style="left:150.6px;top:179.4px;" width="11" height="10" viewBox="0 0 11 10"><path d="M.6.3l9.800 9.400 M10.400.3L.6 9.700" stroke="#b4b4b4" stroke-width="1.500"/></svg>
<svg style="left:185.6px;top:179.6px;" width="13" height="10" viewBox="0 0 13 10"><path d="M.6 5.600l3.800 3.600L12.200.5" fill="none" stroke="#b4b4b4" stroke-width="1.700"/></svg>
<span style="left:222.5px;top:176.00px;font-size:16px;line-height:16px;font-family:'Liberation Serif',serif;color:#3b3a39;font-style:italic;-webkit-text-stroke:.3px #3b3a39;">f</span>
<span style="left:228.0px;top:182.00px;font-size:10.5px;line-height:10.5px;font-family:'Liberation Serif',serif;color:#3b3a39;font-style:italic;-webkit-text-stroke:.3px #3b3a39;">x</span>
<div style="left:250px;top:171px;width:1665px;height:46px;background:#fff;border:1px solid #d0d0d0;"></div>
<span style="left:262.0px;top:178.00px;font-size:13px;line-height:13px;letter-spacing:0.32px;color:#262626;">19/09/2025</span>
<svg style="left:1902.5px;top:179.8px;" width="8" height="6" viewBox="0 0 8 6"><path d="M.8 4.800l3.200-3.200 3.200 3.200" fill="none" stroke="#666" stroke-width="1.800"/></svg>
<div id="colhdr" style="left:0;top:227px;width:1899px;height:20px;background:#e6e6e6;border-bottom:1px solid #9b9b9b">
<svg style="left:17.5px;top:4.7px;" width="11.5" height="11.5" viewBox="0 0 11.5 11.5"><path d="M11.500 0V11.500H0Z" fill="#b4b4b4"/></svg>
<div style="left:71px;top:1px;width:1px;height:18px;background:#c3c3c3;"></div>
<span style="left:47.9px;top:4.00px;font-size:13.8px;line-height:13.8px;color:#444;">A</span>
<div style="left:210px;top:1px;width:1px;height:18px;background:#c3c3c3;"></div>
<span style="left:136.4px;top:4.00px;font-size:13.8px;line-height:13.8px;color:#444;">B</span>
<div style="left:210px;top:0px;width:89px;height:20px;background:#d2d2d2;border-bottom:2px solid #217346"></div>
<div style="left:298px;top:1px;width:1px;height:18px;background:#c3c3c3;"></div>
<span style="left:249.5px;top:4.00px;font-size:13.8px;line-height:13.8px;color:#217346;">C</span>
<div style="left:905px;top:1px;width:1px;height:18px;background:#c3c3c3;"></div>
<span style="left:597.0px;top:4.00px;font-size:13.8px;line-height:13.8px;color:#444;">D</span>
<div style="left:1012px;top:1px;width:1px;height:18px;background:#c3c3c3;"></div>
<span style="left:954.4px;top:4.00px;font-size:13.8px;line-height:13.8px;color:#444;">E</span>
<div style="left:1170px;top:1px;width:1px;height:18px;background:#c3c3c3;"></div>
<span style="left:1087.3px;top:4.00px;font-size:13.8px;line-height:13.8px;color:#444;">F</span>
<div style="left:1277px;top:1px;width:1px;height:18px;background:#c3c3c3;"></div>
<span style="left:1218.6px;top:4.00px;font-size:13.8px;line-height:13.8px;color:#444;">G</span>
<div style="left:1362px;top:1px;width:1px;height:18px;background:#c3c3c3;"></div>
<span style="left:1315.0px;top:4.00px;font-size:13.8px;line-height:13.8px;color:#444;">H</span>
<div style="left:1457px;top:1px;width:1px;height:18px;background:#c3c3c3;"></div>
<span style="left:1408.1px;top:4.00px;font-size:13.8px;line-height:13.8px;color:#444;">I</span>
<div style="left:1684px;top:1px;width:1px;height:18px;background:#c3c3c3;"></div>
<span style="left:1567.5px;top:4.00px;font-size:13.8px;line-height:13.8px;color:#444;">J</span>
<div style="left:1870px;top:1px;width:1px;height:18px;background:#c3c3c3;"></div>
<span style="left:1772.9px;top:4.00px;font-size:13.8px;line-height:13.8px;color:#444;">K</span>
<div style="left:32px;top:1px;width:1px;height:18px;background:#c3c3c3;"></div>
</div>
<div id="grid">
<div style="left:0px;top:0px;width:33px;height:736px;background:#e6e6e6;border-right:1px solid #9b9b9b"></div>
<div style="left:0px;top:16px;width:32px;height:1px;background:#c3c3c3;"></div>
<span class="rh" style="left:3.2px;top:3.00px;font-size:12.6px;line-height:12.6px;letter-spacing:-0.11px;">1386</span>
<span class="a" style="left:40.3px;top:3.00px;font-size:12.2px;line-height:12.2px;letter-spacing:-0.10px;">1220</span>
<span style="left:81.8px;top:3.00px;font-size:12px;line-height:12px;"><u style="width:20.5px;transform:scaleX(0.831)">BCA</u><b style="width:6.00px">/</b><u style="width:39.2px;transform:scaleX(0.865)">WARNA</u><b style="width:6.00px">/</b><i style="letter-spacing:1.0px">25</i><b style="width:6.00px">/</b><i style="letter-spacing:1.0px">1388</i></span>
<span style="left:213.3px;top:3.00px;font-size:12px;line-height:12px;"><i style="letter-spacing:1.0px">16</i><b style="width:6.00px">/</b><i style="letter-spacing:1.0px">09</i><b style="width:6.00px">/</b><i style="letter-spacing:1.0px">2025</i></span>
<span style="left:301.0px;top:3.00px;font-size:12px;line-height:12px;"><u style="width:96.1px;transform:scaleX(0.909)">BIF TRANSFER DR </u><i style="letter-spacing:1.0px">008</i><u style="width:108.7px;transform:scaleX(0.881)">WASIATUL FAJAR IST</u></span>
<span style="left:941.4px;top:3.00px;font-size:11.5px;line-height:11.5px;letter-spacing:0.70px;">1.623.700,00</span>
<span style="left:1207.5px;top:3.00px;font-size:12.3px;line-height:12.3px;letter-spacing:0.50px;">662.428.215</span>
<span class="t" style="left:1301.0px;top:3.00px;font-size:12px;line-height:12px;font-family:'Liberation Serif',serif;">1000.03</span>
<span class="t" style="left:1390.8px;top:3.00px;font-size:12px;line-height:12px;font-family:'Liberation Serif',serif;">4000.01</span>
<span class="t" style="left:1460.0px;top:2.00px;font-size:13px;line-height:13px;font-family:'Liberation Serif',serif;max-width:224px;overflow:hidden;"> - Penjualan</span>
<span class="t" style="left:1873.0px;top:2.00px;font-size:13px;line-height:13px;font-family:'Liberation Serif',serif;">Penjualan</span>
<div class="gl" style="left:1278px;top:16px;width:84px"></div>
<div class="gl" style="left:1458px;top:16px;width:226px"></div>
<div class="gl" style="left:1870px;top:16px;width:29px"></div>
<div style="left:0px;top:33px;width:32px;height:1px;background:#c3c3c3;"></div>
<span class="rh" style="left:3.2px;top:20.00px;font-size:12.6px;line-height:12.6px;letter-spacing:-0.11px;">1387</span>
<span class="a" style="left:40.3px;top:20.00px;font-size:12.2px;line-height:12.2px;letter-spacing:-0.10px;">1220</span>
<span style="left:81.8px;top:20.00px;font-size:12px;line-height:12px;"><u style="width:20.5px;transform:scaleX(0.831)">BCA</u><b style="width:6.00px">/</b><u style="width:39.2px;transform:scaleX(0.865)">WARNA</u><b style="width:6.00px">/</b><i style="letter-spacing:1.0px">25</i><b style="width:6.00px">/</b><i style="letter-spacing:1.0px">1389</i></span>
<span style="left:213.3px;top:20.00px;font-size:12px;line-height:12px;"><i style="letter-spacing:1.0px">16</i><b style="width:6.00px">/</b><i style="letter-spacing:1.0px">09</i><b style="width:6.00px">/</b><i style="letter-spacing:1.0px">2025</i></span>
<span style="left:301.0px;top:20.00px;font-size:12px;line-height:12px;"><i style="letter-spacing:1.0px">1609</i><b style="width:6.00px">/</b><u style="width:33.4px;transform:scaleX(0.894)">FTSCY</u><b style="width:6.00px">/</b><u style="width:17.4px;transform:scaleX(0.967)">WS</u><i style="letter-spacing:0.9px">95031200000.00</i><u style="width:31.7px;transform:scaleX(0.880)">SAHRI</u></span>
<span style="left:950.3px;top:20.00px;font-size:11.5px;line-height:11.5px;letter-spacing:0.82px;">200.000,00</span>
<span style="left:1207.5px;top:20.00px;font-size:12.3px;line-height:12.3px;letter-spacing:0.50px;">662.628.215</span>
<span class="t" style="left:1301.0px;top:20.00px;font-size:12px;line-height:12px;font-family:'Liberation Serif',serif;">1000.03</span>
<span class="t" style="left:1390.8px;top:20.00px;font-size:12px;line-height:12px;font-family:'Liberation Serif',serif;">4000.01</span>
<span class="t" style="left:1460.0px;top:19.00px;font-size:13px;line-height:13px;font-family:'Liberation Serif',serif;max-width:224px;overflow:hidden;"> - Penjualan</span>
<span class="t" style="left:1873.0px;top:19.00px;font-size:13px;line-height:13px;font-family:'Liberation Serif',serif;">Penjualan</span>
<div class="gl" style="left:1278px;top:33px;width:84px"></div>
<div class="gl" style="left:1458px;top:33px;width:226px"></div>
<div class="gl" style="left:1870px;top:33px;width:29px"></div>
<div style="left:0px;top:50px;width:32px;height:1px;background:#c3c3c3;"></div>
<span class="rh" style="left:3.2px;top:37.00px;font-size:12.6px;line-height:12.6px;letter-spacing:-0.11px;">1388</span>
<span class="a" style="left:40.3px;top:37.00px;font-size:12.2px;line-height:12.2px;letter-spacing:-0.10px;">1228</span>
<span style="left:81.8px;top:37.00px;font-size:12px;line-height:12px;"><u style="width:20.5px;transform:scaleX(0.831)">BCA</u><b style="width:6.00px">/</b><u style="width:39.2px;transform:scaleX(0.865)">WARNA</u><b style="width:6.00px">/</b><i style="letter-spacing:1.0px">25</i><b style="width:6.00px">/</b><i style="letter-spacing:1.0px">1390</i></span>
<span style="left:213.3px;top:37.00px;font-size:12px;line-height:12px;"><i style="letter-spacing:1.0px">16</i><b style="width:6.00px">/</b><i style="letter-spacing:1.0px">09</i><b style="width:6.00px">/</b><i style="letter-spacing:1.0px">2025</i></span>
<span style="left:301.0px;top:37.00px;font-size:12px;line-height:12px;"><i style="letter-spacing:1.0px">1609</i><b style="width:6.00px">/</b><u style="width:32.5px;transform:scaleX(0.855)">FTFVA</u><b style="width:6.00px">/</b><u style="width:17.4px;transform:scaleX(0.967)">WS</u><i style="letter-spacing:1.0px">9505112716</i><b style="width:6.00px">/</b><u style="width:79.5px;transform:scaleX(0.880)">SENTRAL CARG</u>-- <i style="letter-spacing:1.0px">00068528</i></span>
<span style="left:1115.6px;top:37.00px;font-size:11.5px;line-height:11.5px;letter-spacing:0.73px;">73.700,00</span>
<span style="left:1207.5px;top:37.00px;font-size:12.3px;line-height:12.3px;letter-spacing:0.50px;">662.554.515</span>
<span class="t" style="left:1301.0px;top:37.00px;font-size:12px;line-height:12px;font-family:'Liberation Serif',serif;">1000.03</span>
<span class="t" style="left:1390.8px;top:37.00px;font-size:12px;line-height:12px;font-family:'Liberation Serif',serif;">6203.05</span>
<span class="t" style="left:1460.0px;top:36.00px;font-size:13px;line-height:13px;font-family:'Liberation Serif',serif;max-width:224px;overflow:hidden;"> -</span>
<div class="gl" style="left:1278px;top:50px;width:84px"></div>
<div class="gl" style="left:1458px;top:50px;width:226px"></div>
<div style="left:0px;top:67px;width:32px;height:1px;background:#c3c3c3;"></div>
<span class="rh" style="left:3.2px;top:54.00px;font-size:12.6px;line-height:12.6px;letter-spacing:-0.11px;">1389</span>
<span class="a" style="left:40.3px;top:54.00px;font-size:12.2px;line-height:12.2px;letter-spacing:-0.10px;">1229</span>
<span style="left:81.8px;top:54.00px;font-size:12px;line-height:12px;"><u style="width:20.5px;transform:scaleX(0.831)">BCA</u><b style="width:6.00px">/</b><u style="width:39.2px;transform:scaleX(0.865)">WARNA</u><b style="width:6.00px">/</b><i style="letter-spacing:1.0px">25</i><b style="width:6.00px">/</b><i style="letter-spacing:1.0px">1391</i></span>
<span style="left:213.3px;top:54.00px;font-size:12px;line-height:12px;"><i style="letter-spacing:0.9px">17</i><b style="width:6.00px">/</b><i style="letter-spacing:1.0px">09</i><b style="width:6.00px">/</b><i style="letter-spacing:1.0px">2025</i></span>
<span style="left:301.0px;top:54.00px;font-size:12px;line-height:12px;"><i style="letter-spacing:1.0px">1709</i><b style="width:6.00px">/</b><u style="width:33.4px;transform:scaleX(0.894)">FTSCY</u><b style="width:6.00px">/</b><u style="width:17.4px;transform:scaleX(0.967)">WS</u><i style="letter-spacing:0.9px">950514132441.00</i><u style="width:118.2px;transform:scaleX(0.905)">BENUA SEJAHTERA KE</u></span>
<span style="left:1099.2px;top:54.00px;font-size:11.5px;line-height:11.5px;letter-spacing:0.72px;">4.132.441,00</span>
<span style="left:1207.7px;top:54.00px;font-size:12.3px;line-height:12.3px;letter-spacing:0.48px;">658.422.074</span>
<span class="t" style="left:1301.0px;top:54.00px;font-size:12px;line-height:12px;font-family:'Liberation Serif',serif;">1000.03</span>
<span class="t" style="left:1390.8px;top:54.00px;font-size:12px;line-height:12px;font-family:'Liberation Serif',serif;">5000.01</span>
<span class="t" style="left:1460.0px;top:53.00px;font-size:13px;line-height:13px;font-family:'Liberation Serif',serif;max-width:224px;overflow:hidden;"> -</span>
<div class="gl" style="left:1278px;top:67px;width:84px"></div>
<div class="gl" style="left:1458px;top:67px;width:226px"></div>
<div style="left:0px;top:84px;width:32px;height:1px;background:#c3c3c3;"></div>
<span class="rh" style="left:3.2px;top:71.00px;font-size:12.6px;line-height:12.6px;letter-spacing:-0.11px;">1390</span>
<span class="a" style="left:40.3px;top:71.00px;font-size:12.2px;line-height:12.2px;letter-spacing:-0.10px;">1230</span>
<span style="left:81.8px;top:71.00px;font-size:12px;line-height:12px;"><u style="width:20.5px;transform:scaleX(0.831)">BCA</u><b style="width:6.00px">/</b><u style="width:39.2px;transform:scaleX(0.865)">WARNA</u><b style="width:6.00px">/</b><i style="letter-spacing:1.0px">25</i><b style="width:6.00px">/</b><i style="letter-spacing:1.0px">1392</i></span>
<span style="left:213.3px;top:71.00px;font-size:12px;line-height:12px;"><i style="letter-spacing:0.9px">17</i><b style="width:6.00px">/</b><i style="letter-spacing:1.0px">09</i><b style="width:6.00px">/</b><i style="letter-spacing:1.0px">2025</i></span>
<span style="left:301.0px;top:71.00px;font-size:12px;line-height:12px;"><i style="letter-spacing:1.0px">1709</i><b style="width:6.00px">/</b><u style="width:32.5px;transform:scaleX(0.855)">FTFVA</u><b style="width:6.00px">/</b><u style="width:17.4px;transform:scaleX(0.967)">WS</u><i style="letter-spacing:1.0px">9505112716</i><b style="width:6.00px">/</b><u style="width:79.5px;transform:scaleX(0.880)">SENTRAL CARG</u>-- <i style="letter-spacing:1.0px">00068528</i></span>
<span style="left:1108.5px;top:71.00px;font-size:11.5px;line-height:11.5px;letter-spacing:0.80px;">127.500,00</span>
<span style="left:1207.7px;top:71.00px;font-size:12.3px;line-height:12.3px;letter-spacing:0.48px;">658.294.574</span>
<span class="t" style="left:1301.0px;top:71.00px;font-size:12px;line-height:12px;font-family:'Liberation Serif',serif;">1000.03</span>
<span class="t" style="left:1390.8px;top:71.00px;font-size:12px;line-height:12px;font-family:'Liberation Serif',serif;">6203.05</span>
<span class="t" style="left:1460.0px;top:70.00px;font-size:13px;line-height:13px;font-family:'Liberation Serif',serif;max-width:224px;overflow:hidden;"> -</span>
<div class="gl" style="left:1278px;top:84px;width:84px"></div>
<div class="gl" style="left:1458px;top:84px;width:226px"></div>
<div style="left:0px;top:101px;width:32px;height:1px;background:#c3c3c3;"></div>
<span class="rh" style="left:3.2px;top:88.00px;font-size:12.6px;line-height:12.6px;letter-spacing:-0.11px;">1391</span>
<span class="a" style="left:40.3px;top:88.00px;font-size:12.2px;line-height:12.2px;letter-spacing:-0.10px;">1220</span>
<span style="left:81.8px;top:88.00px;font-size:12px;line-height:12px;"><u style="width:20.5px;transform:scaleX(0.831)">BCA</u><b style="width:6.00px">/</b><u style="width:39.2px;transform:scaleX(0.865)">WARNA</u><b style="width:6.00px">/</b><i style="letter-spacing:1.0px">25</i><b style="width:6.00px">/</b><i style="letter-spacing:1.0px">1393</i></span>
<span style="left:213.3px;top:88.00px;font-size:12px;line-height:12px;"><i style="letter-spacing:0.9px">17</i><b style="width:6.00px">/</b><i style="letter-spacing:1.0px">09</i><b style="width:6.00px">/</b><i style="letter-spacing:1.0px">2025</i></span>
<span style="left:301.0px;top:88.00px;font-size:12px;line-height:12px;"><u style="width:96.1px;transform:scaleX(0.909)">BIF TRANSFER DR </u><i style="letter-spacing:1.0px">008</i><u style="width:104.0px;transform:scaleX(0.899)">MUHAMMAD NURBI</u></span>
<span style="left:950.7px;top:88.00px;font-size:11.5px;line-height:11.5px;letter-spacing:0.79px;">877.500,00</span>
<span style="left:1207.9px;top:88.00px;font-size:12.3px;line-height:12.3px;letter-spacing:0.46px;">659.172.074</span>
<span class="t" style="left:1301.0px;top:88.00px;font-size:12px;line-height:12px;font-family:'Liberation Serif',serif;">1000.03</span>
<span class="t" style="left:1390.8px;top:88.00px;font-size:12px;line-height:12px;font-family:'Liberation Serif',serif;">4000.01</span>
<span class="t" style="left:1460.0px;top:87.00px;font-size:13px;line-height:13px;font-family:'Liberation Serif',serif;max-width:224px;overflow:hidden;"> - Penjualan</span>
<span class="t" style="left:1873.0px;top:87.00px;font-size:13px;line-height:13px;font-family:'Liberation Serif',serif;">Penjualan</span>
<div class="gl" style="left:1278px;top:101px;width:84px"></div>
<div class="gl" style="left:1458px;top:101px;width:226px"></div>
<div class="gl" style="left:1870px;top:101px;width:29px"></div>
<div style="left:0px;top:118px;width:32px;height:1px;background:#c3c3c3;"></div>
<span class="rh" style="left:3.2px;top:105.00px;font-size:12.6px;line-height:12.6px;letter-spacing:-0.11px;">1392</span>
<span class="a" style="left:40.3px;top:105.00px;font-size:12.2px;line-height:12.2px;letter-spacing:-0.10px;">1220</span>
<span style="left:81.8px;top:105.00px;font-size:12px;line-height:12px;"><u style="width:20.5px;transform:scaleX(0.831)">BCA</u><b style="width:6.00px">/</b><u style="width:39.2px;transform:scaleX(0.865)">WARNA</u><b style="width:6.00px">/</b><i style="letter-spacing:1.0px">25</i><b style="width:6.00px">/</b><i style="letter-spacing:1.0px">1394</i></span>
<span style="left:213.3px;top:105.00px;font-size:12px;line-height:12px;"><i style="letter-spacing:1.0px">18</i><b style="width:6.00px">/</b><i style="letter-spacing:1.0px">09</i><b style="width:6.00px">/</b><i style="letter-spacing:1.0px">2025</i></span>
<span style="left:301.0px;top:105.00px;font-size:12px;line-height:12px;"><i style="letter-spacing:1.0px">1809</i><b style="width:6.00px">/</b><u style="width:33.4px;transform:scaleX(0.894)">FTSCY</u><b style="width:6.00px">/</b><u style="width:17.4px;transform:scaleX(0.967)">WS</u><i style="letter-spacing:0.8px">95031967500.00</i><u style="width:120.3px;transform:scaleX(0.880)">BUNGA SAMANTHA LIO</u></span>
<span style="left:950.5px;top:105.00px;font-size:11.5px;line-height:11.5px;letter-spacing:0.80px;">967.500,00</span>
<span style="left:1207.7px;top:105.00px;font-size:12.3px;line-height:12.3px;letter-spacing:0.48px;">660.139.574</span>
<span class="t" style="left:1301.0px;top:105.00px;font-size:12px;line-height:12px;font-family:'Liberation Serif',serif;">1000.03</span>
<span class="t" style="left:1390.8px;top:105.00px;font-size:12px;line-height:12px;font-family:'Liberation Serif',serif;">4000.01</span>
<span class="t" style="left:1460.0px;top:104.00px;font-size:13px;line-height:13px;font-family:'Liberation Serif',serif;max-width:224px;overflow:hidden;"> - Penjualan</span>
<span class="t" style="left:1873.0px;top:104.00px;font-size:13px;line-height:13px;font-family:'Liberation Serif',serif;">Penjualan</span>
<div class="gl" style="left:1278px;top:118px;width:84px"></div>
<div class="gl" style="left:1458px;top:118px;width:226px"></div>
<div class="gl" style="left:1870px;top:118px;width:29px"></div>
<div style="left:0px;top:135px;width:32px;height:1px;background:#c3c3c3;"></div>
<span class="rh" style="left:3.2px;top:122.00px;font-size:12.6px;line-height:12.6px;letter-spacing:-0.11px;">1393</span>
<span class="a" style="left:40.3px;top:122.00px;font-size:12.2px;line-height:12.2px;letter-spacing:-0.10px;">1233</span>
<span style="left:81.8px;top:122.00px;font-size:12px;line-height:12px;"><u style="width:20.5px;transform:scaleX(0.831)">BCA</u><b style="width:6.00px">/</b><u style="width:39.2px;transform:scaleX(0.865)">WARNA</u><b style="width:6.00px">/</b><i style="letter-spacing:1.0px">25</i><b style="width:6.00px">/</b><i style="letter-spacing:1.0px">1395</i></span>
<span style="left:213.3px;top:122.00px;font-size:12px;line-height:12px;"><i style="letter-spacing:1.0px">18</i><b style="width:6.00px">/</b><i style="letter-spacing:1.0px">09</i><b style="width:6.00px">/</b><i style="letter-spacing:1.0px">2025</i></span>
<span style="left:301.0px;top:122.00px;font-size:12px;line-height:12px;"><i style="letter-spacing:1.0px">1809</i><b style="width:6.00px">/</b><u style="width:33.4px;transform:scaleX(0.894)">FTSCY</u><b style="width:6.00px">/</b><u style="width:17.4px;transform:scaleX(0.967)">WS</u><i style="letter-spacing:0.9px">950515000000.00</i><u style="width:99.4px;transform:scaleX(0.895)">NANA SEPTIANSAH</u></span>
<span style="left:1099.2px;top:122.00px;font-size:11.5px;line-height:11.5px;letter-spacing:0.72px;">5.000.000,00</span>
<span style="left:1207.7px;top:122.00px;font-size:12.3px;line-height:12.3px;letter-spacing:0.48px;">655.139.574</span>
<span class="t" style="left:1301.0px;top:122.00px;font-size:12px;line-height:12px;font-family:'Liberation Serif',serif;">1000.03</span>
<span class="t" style="left:1390.8px;top:122.00px;font-size:12px;line-height:12px;font-family:'Liberation Serif',serif;">5000.01</span>
<span class="t" style="left:1460.0px;top:121.00px;font-size:13px;line-height:13px;font-family:'Liberation Serif',serif;max-width:224px;overflow:hidden;"> -</span>
<div class="gl" style="left:1278px;top:135px;width:84px"></div>
<div class="gl" style="left:1458px;top:135px;width:226px"></div>
<div style="left:0px;top:152px;width:32px;height:1px;background:#c3c3c3;"></div>
<span class="rh" style="left:3.2px;top:139.00px;font-size:12.6px;line-height:12.6px;letter-spacing:-0.11px;">1394</span>
<span class="a" style="left:40.3px;top:139.00px;font-size:12.2px;line-height:12.2px;letter-spacing:-0.10px;">1234</span>
<span style="left:81.8px;top:139.00px;font-size:12px;line-height:12px;"><u style="width:20.5px;transform:scaleX(0.831)">BCA</u><b style="width:6.00px">/</b><u style="width:39.2px;transform:scaleX(0.865)">WARNA</u><b style="width:6.00px">/</b><i style="letter-spacing:1.0px">25</i><b style="width:6.00px">/</b><i style="letter-spacing:1.0px">1396</i></span>
<span style="left:213.3px;top:139.00px;font-size:12px;line-height:12px;"><i style="letter-spacing:1.0px">18</i><b style="width:6.00px">/</b><i style="letter-spacing:1.0px">09</i><b style="width:6.00px">/</b><i style="letter-spacing:1.0px">2025</i></span>
<span style="left:301.0px;top:139.00px;font-size:12px;line-height:12px;"><i style="letter-spacing:1.0px">1809</i><b style="width:6.00px">/</b><u style="width:33.4px;transform:scaleX(0.894)">FTSCY</u><b style="width:6.00px">/</b><u style="width:17.4px;transform:scaleX(0.967)">WS</u><i style="letter-spacing:0.9px">950519558500.00</i><u style="width:40.1px;transform:scaleX(0.859)">BAHAKI</u></span>
<span style="left:1099.2px;top:139.00px;font-size:11.5px;line-height:11.5px;letter-spacing:0.72px;">9.558.500,00</span>
<span style="left:1207.7px;top:139.00px;font-size:12.3px;line-height:12.3px;letter-spacing:0.48px;">645.581.074</span>
<span class="t" style="left:1301.0px;top:139.00px;font-size:12px;line-height:12px;font-family:'Liberation Serif',serif;">1000.03</span>
<span class="t" style="left:1390.8px;top:139.00px;font-size:12px;line-height:12px;font-family:'Liberation Serif',serif;">5000.01</span>
<span class="t" style="left:1460.0px;top:138.00px;font-size:13px;line-height:13px;font-family:'Liberation Serif',serif;max-width:224px;overflow:hidden;"> -</span>
<div class="gl" style="left:1278px;top:152px;width:84px"></div>
<div class="gl" style="left:1458px;top:152px;width:226px"></div>
<div style="left:0px;top:169px;width:32px;height:1px;background:#c3c3c3;"></div>
<span class="rh" style="left:3.2px;top:156.00px;font-size:12.6px;line-height:12.6px;letter-spacing:-0.11px;">1395</span>
<span class="a" style="left:40.3px;top:156.00px;font-size:12.2px;line-height:12.2px;letter-spacing:-0.10px;">1220</span>
<span style="left:81.9px;top:156.00px;font-size:12px;line-height:12px;"><u style="width:20.5px;transform:scaleX(0.831)">BCA</u><b style="width:6.00px">/</b><u style="width:39.2px;transform:scaleX(0.865)">WARNA</u><b style="width:6.00px">/</b><i style="letter-spacing:1.0px">25</i><b style="width:6.00px">/</b><i style="letter-spacing:1.0px">1397</i></span>
<span style="left:213.3px;top:156.00px;font-size:12px;line-height:12px;"><i style="letter-spacing:1.0px">18</i><b style="width:6.00px">/</b><i style="letter-spacing:1.0px">09</i><b style="width:6.00px">/</b><i style="letter-spacing:1.0px">2025</i></span>
<span style="left:301.0px;top:156.00px;font-size:12px;line-height:12px;"><u style="width:96.1px;transform:scaleX(0.909)">BIF TRANSFER DR </u><i style="letter-spacing:1.0px">535</i><u style="width:123.3px;transform:scaleX(0.864)">DIYAH AYU RAHMAWAT</u></span>
<span style="left:941.2px;top:156.00px;font-size:11.5px;line-height:11.5px;letter-spacing:0.72px;">1.102.600,00</span>
<span style="left:1207.7px;top:156.00px;font-size:12.3px;line-height:12.3px;letter-spacing:0.48px;">646.683.674</span>
<span class="t" style="left:1301.0px;top:156.00px;font-size:12px;line-height:12px;font-family:'Liberation Serif',serif;">1000.03</span>
<span class="t" style="left:1390.8px;top:156.00px;font-size:12px;line-height:12px;font-family:'Liberation Serif',serif;">4000.01</span>
<span class="t" style="left:1460.0px;top:155.00px;font-size:13px;line-height:13px;font-family:'Liberation Serif',serif;max-width:224px;overflow:hidden;"> - Penjualan</span>
<span class="t" style="left:1873.0px;top:155.00px;font-size:13px;line-height:13px;font-family:'Liberation Serif',serif;">Penjualan</span>
<div class="gl" style="left:1278px;top:169px;width:84px"></div>
<div class="gl" style="left:1458px;top:169px;width:226px"></div>
<div class="gl" style="left:1870px;top:169px;width:29px"></div>
<div style="left:0px;top:186px;width:32px;height:1px;background:#c3c3c3;"></div>
<span class="rh" style="left:3.2px;top:173.00px;font-size:12.6px;line-height:12.6px;letter-spacing:-0.11px;">1396</span>
<span class="a" style="left:40.3px;top:173.00px;font-size:12.2px;line-height:12.2px;letter-spacing:-0.10px;">1220</span>
<span style="left:81.8px;top:173.00px;font-size:12px;line-height:12px;"><u style="width:20.5px;transform:scaleX(0.831)">BCA</u><b style="width:6.00px">/</b><u style="width:39.2px;transform:scaleX(0.865)">WARNA</u><b style="width:6.00px">/</b><i style="letter-spacing:1.0px">25</i><b style="width:6.00px">/</b><i style="letter-spacing:1.0px">1398</i></span>
<span style="left:213.3px;top:173.00px;font-size:12px;line-height:12px;"><i style="letter-spacing:1.0px">18</i><b style="width:6.00px">/</b><i style="letter-spacing:1.0px">09</i><b style="width:6.00px">/</b><i style="letter-spacing:1.0px">2025</i></span>
<span style="left:301.0px;top:173.00px;font-size:12px;line-height:12px;"><i style="letter-spacing:1.0px">1809</i><b style="width:6.00px">/</b><u style="width:33.4px;transform:scaleX(0.894)">FTSCY</u><b style="width:6.00px">/</b><u style="width:17.4px;transform:scaleX(0.967)">WS</u><i style="letter-spacing:0.9px">950317380000.00</i><u style="width:90.0px;transform:scaleX(0.880)">KUSNADI AZHARI</u></span>
<span style="left:941.4px;top:173.00px;font-size:11.5px;line-height:11.5px;letter-spacing:0.70px;">7.380.000,00</span>
<span style="left:1207.7px;top:173.00px;font-size:12.3px;line-height:12.3px;letter-spacing:0.48px;">654.063.674</span>
<span class="t" style="left:1301.0px;top:173.00px;font-size:12px;line-height:12px;font-family:'Liberation Serif',serif;">1000.03</span>
<span class="t" style="left:1390.8px;top:173.00px;font-size:12px;line-height:12px;font-family:'Liberation Serif',serif;">4000.01</span>
<span class="t" style="left:1460.0px;top:172.00px;font-size:13px;line-height:13px;font-family:'Liberation Serif',serif;max-width:224px;overflow:hidden;"> - Penjualan</span>
<span class="t" style="left:1873.0px;top:172.00px;font-size:13px;line-height:13px;font-family:'Liberation Serif',serif;">Penjualan</span>
<div class="gl" style="left:1278px;top:186px;width:84px"></div>
<div class="gl" style="left:1458px;top:186px;width:226px"></div>
<div class="gl" style="left:1870px;top:186px;width:29px"></div>
<div style="left:0px;top:203px;width:32px;height:1px;background:#c3c3c3;"></div>
<span class="rh" style="left:3.2px;top:190.00px;font-size:12.6px;line-height:12.6px;letter-spacing:-0.11px;">1397</span>
<span class="a" style="left:40.3px;top:190.00px;font-size:12.2px;line-height:12.2px;letter-spacing:-0.10px;">1220</span>
<span style="left:81.8px;top:190.00px;font-size:12px;line-height:12px;"><u style="width:20.5px;transform:scaleX(0.831)">BCA</u><b style="width:6.00px">/</b><u style="width:39.2px;transform:scaleX(0.865)">WARNA</u><b style="width:6.00px">/</b><i style="letter-spacing:1.0px">25</i><b style="width:6.00px">/</b><i style="letter-spacing:1.0px">1399</i></span>
<span style="left:213.3px;top:190.00px;font-size:12px;line-height:12px;"><i style="letter-spacing:1.0px">18</i><b style="width:6.00px">/</b><i style="letter-spacing:1.0px">09</i><b style="width:6.00px">/</b><i style="letter-spacing:1.0px">2025</i></span>
<span style="left:301.0px;top:190.00px;font-size:12px;line-height:12px;"><i style="letter-spacing:1.0px">1809</i><b style="width:6.00px">/</b><u style="width:33.4px;transform:scaleX(0.894)">FTSCY</u><b style="width:6.00px">/</b><u style="width:17.4px;transform:scaleX(0.967)">WS</u><i style="letter-spacing:0.9px">950311280500.00</i>pelunasan dan ongk ir dus donatKHASINATUZ ZAKIYAH</span>
<span style="left:941.2px;top:190.00px;font-size:11.5px;line-height:11.5px;letter-spacing:0.72px;">1.280.500,00</span>
<span style="left:1207.7px;top:190.00px;font-size:12.3px;line-height:12.3px;letter-spacing:0.48px;">655.344.174</span>
<span class="t" style="left:1301.0px;top:190.00px;font-size:12px;line-height:12px;font-family:'Liberation Serif',serif;">1000.03</span>
<span class="t" style="left:1390.8px;top:190.00px;font-size:12px;line-height:12px;font-family:'Liberation Serif',serif;">4000.01</span>
<span class="t" style="left:1460.0px;top:189.00px;font-size:13px;line-height:13px;font-family:'Liberation Serif',serif;max-width:224px;overflow:hidden;"> - Penjualan</span>
<span class="t" style="left:1873.0px;top:189.00px;font-size:13px;line-height:13px;font-family:'Liberation Serif',serif;">Penjualan</span>
<div class="gl" style="left:1278px;top:203px;width:84px"></div>
<div class="gl" style="left:1458px;top:203px;width:226px"></div>
<div class="gl" style="left:1870px;top:203px;width:29px"></div>
<div style="left:0px;top:203px;width:33px;height:18px;background:#d2d2d2;border-right:2px solid #217346"></div>
<div style="left:0px;top:220px;width:32px;height:1px;background:#c3c3c3;"></div>
<span class="rh" style="left:3.2px;top:207.00px;font-size:12.6px;line-height:12.6px;letter-spacing:-0.11px;color:#217346;">1398</span>
<span class="a" style="left:40.3px;top:207.00px;font-size:12.2px;line-height:12.2px;letter-spacing:-0.10px;">1238</span>
<span style="left:81.8px;top:207.00px;font-size:12px;line-height:12px;"><u style="width:20.5px;transform:scaleX(0.831)">BCA</u><b style="width:6.00px">/</b><u style="width:39.2px;transform:scaleX(0.865)">WARNA</u><b style="width:6.00px">/</b><i style="letter-spacing:1.0px">25</i><b style="width:6.00px">/</b><i style="letter-spacing:1.0px">1400</i></span>
<span style="left:213.3px;top:207.00px;font-size:12px;line-height:12px;"><i style="letter-spacing:1.0px">19</i><b style="width:6.00px">/</b><i style="letter-spacing:1.0px">09</i><b style="width:6.00px">/</b><i style="letter-spacing:1.0px">2025</i></span>
<span style="left:301.0px;top:207.00px;font-size:12px;line-height:12px;"><i style="letter-spacing:1.0px">1909</i><b style="width:6.00px">/</b><u style="width:33.4px;transform:scaleX(0.894)">FTSCY</u><b style="width:6.00px">/</b><u style="width:17.4px;transform:scaleX(0.967)">WS</u><i style="letter-spacing:0.8px">950516741700.00</i><u style="width:124.2px;transform:scaleX(0.881)">AKBAR NIKMATTULLAH</u></span>
<span style="left:1099.6px;top:207.00px;font-size:11.5px;line-height:11.5px;letter-spacing:0.69px;">6.741.700,00</span>
<span style="left:1207.7px;top:207.00px;font-size:12.3px;line-height:12.3px;letter-spacing:0.48px;">648.602.474</span>
<span class="t" style="left:1301.0px;top:207.00px;font-size:12px;line-height:12px;font-family:'Liberation Serif',serif;">1000.03</span>
<span class="t" style="left:1390.8px;top:207.00px;font-size:12px;line-height:12px;font-family:'Liberation Serif',serif;">5000.01</span>
<span class="t" style="left:1460.0px;top:206.00px;font-size:13px;line-height:13px;font-family:'Liberation Serif',serif;max-width:224px;overflow:hidden;"> -</span>
<div class="gl" style="left:1278px;top:220px;width:84px"></div>
<div class="gl" style="left:1458px;top:220px;width:226px"></div>
<div style="left:0px;top:237px;width:32px;height:1px;background:#c3c3c3;"></div>
<span class="rh" style="left:3.2px;top:224.00px;font-size:12.6px;line-height:12.6px;letter-spacing:-0.11px;">1399</span>
<span class="a" style="left:40.3px;top:224.00px;font-size:12.2px;line-height:12.2px;letter-spacing:-0.10px;">1239</span>
<span style="left:81.8px;top:224.00px;font-size:12px;line-height:12px;"><u style="width:20.5px;transform:scaleX(0.831)">BCA</u><b style="width:6.00px">/</b><u style="width:39.2px;transform:scaleX(0.865)">WARNA</u><b style="width:6.00px">/</b><i style="letter-spacing:1.0px">25</i><b style="width:6.00px">/</b><i style="letter-spacing:1.0px">1401</i></span>
<span style="left:213.3px;top:224.00px;font-size:12px;line-height:12px;"><i style="letter-spacing:1.0px">19</i><b style="width:6.00px">/</b><i style="letter-spacing:1.0px">09</i></span>
<span style="left:301.0px;top:224.00px;font-size:12px;line-height:12px;clip-path:inset(0 0 0 18px);"><i style="letter-spacing:1.0px">1909</i><b style="width:6.00px">/</b><u style="width:33.4px;transform:scaleX(0.894)">FTSCY</u><b style="width:6.00px">/</b><u style="width:17.4px;transform:scaleX(0.967)">WS</u><i style="letter-spacing:0.9px">950514884000.00</i><u style="width:126.6px;transform:scaleX(0.926)">WIKAS MAKMUR WISES</u></span>
<span style="left:1099.2px;top:224.00px;font-size:11.5px;line-height:11.5px;letter-spacing:0.72px;">4.884.000,00</span>
<span style="left:1207.9px;top:224.00px;font-size:12.3px;line-height:12.3px;letter-spacing:0.46px;">643.718.474</span>
<span class="t" style="left:1301.0px;top:224.00px;font-size:12px;line-height:12px;font-family:'Liberation Serif',serif;">1000.03</span>
<span class="t" style="left:1390.8px;top:224.00px;font-size:12px;line-height:12px;font-family:'Liberation Serif',serif;">5000.01</span>
<span class="t" style="left:1460.0px;top:223.00px;font-size:13px;line-height:13px;font-family:'Liberation Serif',serif;max-width:224px;overflow:hidden;"> -</span>
<div class="gl" style="left:1278px;top:237px;width:84px"></div>
<div class="gl" style="left:1458px;top:237px;width:226px"></div>
<div style="left:0px;top:254px;width:32px;height:1px;background:#c3c3c3;"></div>
<span class="rh" style="left:3.2px;top:241.00px;font-size:12.6px;line-height:12.6px;letter-spacing:-0.11px;">1400</span>
<span class="a" style="left:40.3px;top:241.00px;font-size:12.2px;line-height:12.2px;letter-spacing:-0.10px;">1240</span>
<span style="left:81.8px;top:241.00px;font-size:12px;line-height:12px;"><u style="width:20.5px;transform:scaleX(0.831)">BCA</u><b style="width:6.00px">/</b><u style="width:39.2px;transform:scaleX(0.865)">WARNA</u><b style="width:6.00px">/</b><i style="letter-spacing:1.0px">25</i><b style="width:6.00px">/</b><i style="letter-spacing:1.0px">1402</i></span>
<span style="left:213.3px;top:241.00px;font-size:12px;line-height:12px;"><i style="letter-spacing:1.0px">19</i><b style="width:6.00px">/</b><i style="letter-spacing:1.0px">09</i></span>
<span style="left:301.0px;top:241.00px;font-size:12px;line-height:12px;"><i style="letter-spacing:1.0px">1909</i><b style="width:6.00px">/</b><u style="width:33.4px;transform:scaleX(0.894)">FTSCY</u><b style="width:6.00px">/</b><u style="width:17.4px;transform:scaleX(0.967)">WS</u><i style="letter-spacing:0.9px">950511901500.00</i><u style="width:33.3px;transform:scaleX(0.908)">RIEKY</u></span>
<span style="left:1099.2px;top:241.00px;font-size:11.5px;line-height:11.5px;letter-spacing:0.72px;">1.901.500,00</span>
<span style="left:1207.7px;top:241.00px;font-size:12.3px;line-height:12.3px;letter-spacing:0.48px;">641.816.974</span>
<span class="t" style="left:1301.0px;top:241.00px;font-size:12px;line-height:12px;font-family:'Liberation Serif',serif;">1000.03</span>
<span class="t" style="left:1390.8px;top:241.00px;font-size:12px;line-height:12px;font-family:'Liberation Serif',serif;">5000.01</span>
<span class="t" style="left:1460.0px;top:240.00px;font-size:13px;line-height:13px;font-family:'Liberation Serif',serif;max-width:224px;overflow:hidden;"> -</span>
<div class="gl" style="left:1278px;top:254px;width:84px"></div>
<div class="gl" style="left:1458px;top:254px;width:226px"></div>
<div style="left:0px;top:271px;width:32px;height:1px;background:#c3c3c3;"></div>
<span class="rh" style="left:3.2px;top:258.00px;font-size:12.6px;line-height:12.6px;letter-spacing:-0.11px;">1401</span>
<span class="a" style="left:40.3px;top:258.00px;font-size:12.2px;line-height:12.2px;letter-spacing:-0.10px;">1241</span>
<span style="left:81.8px;top:258.00px;font-size:12px;line-height:12px;"><u style="width:20.5px;transform:scaleX(0.831)">BCA</u><b style="width:6.00px">/</b><u style="width:39.2px;transform:scaleX(0.865)">WARNA</u><b style="width:6.00px">/</b><i style="letter-spacing:1.0px">25</i><b style="width:6.00px">/</b><i style="letter-spacing:1.0px">1403</i></span>
<span style="left:213.3px;top:258.00px;font-size:12px;line-height:12px;"><i style="letter-spacing:1.0px">19</i><b style="width:6.00px">/</b><i style="letter-spacing:1.0px">09</i></span>
<span style="left:301.0px;top:258.00px;font-size:12px;line-height:12px;"><i style="letter-spacing:1.0px">1909</i><b style="width:6.00px">/</b><u style="width:33.4px;transform:scaleX(0.894)">FTSCY</u><b style="width:6.00px">/</b><u style="width:17.4px;transform:scaleX(0.967)">WS</u><i style="letter-spacing:0.9px">9505110013196.00</i><u style="width:118.2px;transform:scaleX(0.905)">BENUA SEJAHTERA KE</u></span>
<span style="left:1092.3px;top:258.00px;font-size:11.5px;line-height:11.5px;letter-spacing:0.76px;">10.013.196,00</span>
<span style="left:1207.9px;top:258.00px;font-size:12.3px;line-height:12.3px;letter-spacing:0.46px;">631.803.778</span>
<span class="t" style="left:1301.0px;top:258.00px;font-size:12px;line-height:12px;font-family:'Liberation Serif',serif;">1000.03</span>
<span class="t" style="left:1390.8px;top:258.00px;font-size:12px;line-height:12px;font-family:'Liberation Serif',serif;">5000.01</span>
<span class="t" style="left:1460.0px;top:257.00px;font-size:13px;line-height:13px;font-family:'Liberation Serif',serif;max-width:224px;overflow:hidden;"> -</span>
<div class="gl" style="left:1278px;top:271px;width:84px"></div>
<div class="gl" style="left:1458px;top:271px;width:226px"></div>
<div style="left:0px;top:288px;width:32px;height:1px;background:#c3c3c3;"></div>
<span class="rh" style="left:3.2px;top:275.00px;font-size:12.6px;line-height:12.6px;letter-spacing:-0.11px;">1402</span>
<span class="a" style="left:40.3px;top:275.00px;font-size:12.2px;line-height:12.2px;letter-spacing:-0.10px;">1242</span>
<span style="left:81.8px;top:275.00px;font-size:12px;line-height:12px;"><u style="width:20.5px;transform:scaleX(0.831)">BCA</u><b style="width:6.00px">/</b><u style="width:39.2px;transform:scaleX(0.865)">WARNA</u><b style="width:6.00px">/</b><i style="letter-spacing:1.0px">25</i><b style="width:6.00px">/</b><i style="letter-spacing:1.0px">1404</i></span>
<span style="left:213.3px;top:275.00px;font-size:12px;line-height:12px;"><i style="letter-spacing:1.0px">19</i><b style="width:6.00px">/</b><i style="letter-spacing:1.0px">09</i></span>
<span style="left:301.0px;top:275.00px;font-size:12px;line-height:12px;"><i style="letter-spacing:1.0px">1909</i><b style="width:6.00px">/</b><u style="width:33.4px;transform:scaleX(0.894)">FTSCY</u><b style="width:6.00px">/</b><u style="width:17.4px;transform:scaleX(0.967)">WS</u><i style="letter-spacing:0.9px">950515000000.00</i><u style="width:99.4px;transform:scaleX(0.895)">NANA SEPTIANSAH</u></span>
<span style="left:1099.2px;top:275.00px;font-size:11.5px;line-height:11.5px;letter-spacing:0.72px;">5.000.000,00</span>
<span style="left:1207.9px;top:275.00px;font-size:12.3px;line-height:12.3px;letter-spacing:0.46px;">626.803.778</span>
<span class="t" style="left:1301.0px;top:275.00px;font-size:12px;line-height:12px;font-family:'Liberation Serif',serif;">1000.03</span>
<span class="t" style="left:1390.8px;top:275.00px;font-size:12px;line-height:12px;font-family:'Liberation Serif',serif;">5000.01</span>
<span class="t" style="left:1460.0px;top:274.00px;font-size:13px;line-height:13px;font-family:'Liberation Serif',serif;max-width:224px;overflow:hidden;"> -</span>
<div class="gl" style="left:1278px;top:288px;width:84px"></div>
<div class="gl" style="left:1458px;top:288px;width:226px"></div>
<div style="left:0px;top:305px;width:32px;height:1px;background:#c3c3c3;"></div>
<span class="rh" style="left:3.2px;top:292.00px;font-size:12.6px;line-height:12.6px;letter-spacing:-0.11px;">1403</span>
<span class="a" style="left:40.3px;top:292.00px;font-size:12.2px;line-height:12.2px;letter-spacing:-0.10px;">1220</span>
<span style="left:81.8px;top:292.00px;font-size:12px;line-height:12px;"><u style="width:20.5px;transform:scaleX(0.831)">BCA</u><b style="width:6.00px">/</b><u style="width:39.2px;transform:scaleX(0.865)">WARNA</u><b style="width:6.00px">/</b><i style="letter-spacing:1.0px">25</i><b style="width:6.00px">/</b><i style="letter-spacing:1.0px">1405</i></span>
<span style="left:213.3px;top:292.00px;font-size:12px;line-height:12px;"><i style="letter-spacing:1.0px">19</i><b style="width:6.00px">/</b><i style="letter-spacing:1.0px">09</i><b style="width:6.00px">/</b><i style="letter-spacing:1.0px">2025</i></span>
<span style="left:301.0px;top:292.00px;font-size:12px;line-height:12px;"><u style="width:96.1px;transform:scaleX(0.909)">BIF TRANSFER DR </u><i style="letter-spacing:1.0px">008</i><u style="width:97.1px;transform:scaleX(0.880)">NORITA AGBERINA</u></span>
<span style="left:941.4px;top:292.00px;font-size:11.5px;line-height:11.5px;letter-spacing:0.70px;">2.097.000,00</span>
<span style="left:1207.9px;top:292.00px;font-size:12.3px;line-height:12.3px;letter-spacing:0.46px;">628.900.778</span>
<span class="t" style="left:1301.0px;top:292.00px;font-size:12px;line-height:12px;font-family:'Liberation Serif',serif;">1000.03</span>
<span class="t" style="left:1390.8px;top:292.00px;font-size:12px;line-height:12px;font-family:'Liberation Serif',serif;">4000.01</span>
<span class="t" style="left:1460.0px;top:291.00px;font-size:13px;line-height:13px;font-family:'Liberation Serif',serif;max-width:224px;overflow:hidden;"> - Penjualan</span>
<span class="t" style="left:1873.0px;top:291.00px;font-size:13px;line-height:13px;font-family:'Liberation Serif',serif;">Penjualan</span>
<div class="gl" style="left:1278px;top:305px;width:84px"></div>
<div class="gl" style="left:1458px;top:305px;width:226px"></div>
<div class="gl" style="left:1870px;top:305px;width:29px"></div>
<div style="left:0px;top:322px;width:32px;height:1px;background:#c3c3c3;"></div>
<span class="rh" style="left:3.2px;top:309.00px;font-size:12.6px;line-height:12.6px;letter-spacing:-0.11px;">1404</span>
<span class="a" style="left:40.3px;top:309.00px;font-size:12.2px;line-height:12.2px;letter-spacing:-0.10px;">1244</span>
<span style="left:81.8px;top:309.00px;font-size:12px;line-height:12px;"><u style="width:20.5px;transform:scaleX(0.831)">BCA</u><b style="width:6.00px">/</b><u style="width:39.2px;transform:scaleX(0.865)">WARNA</u><b style="width:6.00px">/</b><i style="letter-spacing:1.0px">25</i><b style="width:6.00px">/</b><i style="letter-spacing:1.0px">1406</i></span>
<span style="left:213.3px;top:309.00px;font-size:12px;line-height:12px;"><i style="letter-spacing:1.0px">20</i><b style="width:6.00px">/</b><i style="letter-spacing:1.0px">09</i></span>
<span style="left:301.0px;top:309.00px;font-size:12px;line-height:12px;"><i style="letter-spacing:1.0px">2009</i><b style="width:6.00px">/</b><u style="width:33.4px;transform:scaleX(0.894)">FTSCY</u><b style="width:6.00px">/</b><u style="width:17.4px;transform:scaleX(0.967)">WS</u><i style="letter-spacing:0.9px">9505115000000.00</i><u style="width:99.4px;transform:scaleX(0.895)">NANA SEPTIANSAH</u></span>
<span style="left:1092.3px;top:309.00px;font-size:11.5px;line-height:11.5px;letter-spacing:0.76px;">15.000.000,00</span>
<span style="left:1207.9px;top:309.00px;font-size:12.3px;line-height:12.3px;letter-spacing:0.46px;">613.900.778</span>
<span class="t" style="left:1301.0px;top:309.00px;font-size:12px;line-height:12px;font-family:'Liberation Serif',serif;">1000.03</span>
<span class="t" style="left:1390.8px;top:309.00px;font-size:12px;line-height:12px;font-family:'Liberation Serif',serif;">5000.01</span>
<span class="t" style="left:1460.0px;top:308.00px;font-size:13px;line-height:13px;font-family:'Liberation Serif',serif;max-width:224px;overflow:hidden;"> -</span>
<div class="gl" style="left:1278px;top:322px;width:84px"></div>
<div class="gl" style="left:1458px;top:322px;width:226px"></div>
<div style="left:0px;top:339px;width:32px;height:1px;background:#c3c3c3;"></div>
<span class="rh" style="left:3.2px;top:326.00px;font-size:12.6px;line-height:12.6px;letter-spacing:-0.11px;">1405</span>
<span class="a" style="left:40.3px;top:326.00px;font-size:12.2px;line-height:12.2px;letter-spacing:-0.10px;">1245</span>
<span style="left:81.9px;top:326.00px;font-size:12px;line-height:12px;"><u style="width:20.5px;transform:scaleX(0.831)">BCA</u><b style="width:6.00px">/</b><u style="width:39.2px;transform:scaleX(0.865)">WARNA</u><b style="width:6.00px">/</b><i style="letter-spacing:1.0px">25</i><b style="width:6.00px">/</b><i style="letter-spacing:1.0px">1407</i></span>
<span style="left:213.3px;top:326.00px;font-size:12px;line-height:12px;"><i style="letter-spacing:1.0px">20</i><b style="width:6.00px">/</b><i style="letter-spacing:1.0px">09</i></span>
<span style="left:301.0px;top:326.00px;font-size:12px;line-height:12px;"><u style="width:96.6px;transform:scaleX(0.920)">BIF TRANSFER KE </u><i style="letter-spacing:1.0px">008</i><u style="width:141.3px;transform:scaleX(0.887)">DARA BANCA INDONESKBB</u></span>
<span style="left:1092.3px;top:326.00px;font-size:11.5px;line-height:11.5px;letter-spacing:0.76px;">14.992.228,68</span>
<span style="left:1207.5px;top:326.00px;font-size:12.3px;line-height:12.3px;letter-spacing:0.50px;">598.908.549</span>
<span class="t" style="left:1301.0px;top:326.00px;font-size:12px;line-height:12px;font-family:'Liberation Serif',serif;">1000.03</span>
<span class="t" style="left:1390.8px;top:326.00px;font-size:12px;line-height:12px;font-family:'Liberation Serif',serif;">5000.01</span>
<span class="t" style="left:1460.0px;top:325.00px;font-size:13px;line-height:13px;font-family:'Liberation Serif',serif;max-width:224px;overflow:hidden;"> -</span>
<div class="gl" style="left:1278px;top:339px;width:84px"></div>
<div class="gl" style="left:1458px;top:339px;width:226px"></div>
<div style="left:0px;top:356px;width:32px;height:1px;background:#c3c3c3;"></div>
<span class="rh" style="left:3.2px;top:343.00px;font-size:12.6px;line-height:12.6px;letter-spacing:-0.11px;">1406</span>
<span class="a" style="left:40.3px;top:343.00px;font-size:12.2px;line-height:12.2px;letter-spacing:-0.10px;">1246</span>
<span style="left:81.8px;top:343.00px;font-size:12px;line-height:12px;"><u style="width:20.5px;transform:scaleX(0.831)">BCA</u><b style="width:6.00px">/</b><u style="width:39.2px;transform:scaleX(0.865)">WARNA</u><b style="width:6.00px">/</b><i style="letter-spacing:1.0px">25</i><b style="width:6.00px">/</b><i style="letter-spacing:1.0px">1408</i></span>
<span style="left:213.3px;top:343.00px;font-size:12px;line-height:12px;"><i style="letter-spacing:1.0px">20</i><b style="width:6.00px">/</b><i style="letter-spacing:1.0px">09</i></span>
<span style="left:301.0px;top:343.00px;font-size:12px;line-height:12px;"><u style="width:97.3px;transform:scaleX(0.890)">BIF BIAYA TXN KE </u><i style="letter-spacing:1.0px">008</i><u style="width:141.3px;transform:scaleX(0.887)">DARA BANCA INDONESKBB</u></span>
<span style="left:1122.2px;top:343.00px;font-size:11.5px;line-height:11.5px;letter-spacing:0.72px;">2.500,00</span>
<span style="left:1207.5px;top:343.00px;font-size:12.3px;line-height:12.3px;letter-spacing:0.50px;">598.906.049</span>
<span class="t" style="left:1301.0px;top:343.00px;font-size:12px;line-height:12px;font-family:'Liberation Serif',serif;">1000.03</span>
<span class="t" style="left:1390.8px;top:343.00px;font-size:12px;line-height:12px;font-family:'Liberation Serif',serif;">7200.02</span>
<span class="t" style="left:1460.0px;top:342.00px;font-size:13px;line-height:13px;letter-spacing:-0.07px;font-family:'Liberation Serif',serif;max-width:224px;overflow:hidden;">Biaya Adm - Biaya Adm Bank &amp; Buku Cek</span>
<span class="t" style="left:1687.0px;top:342.00px;font-size:13px;line-height:13px;font-family:'Liberation Serif',serif;">Biaya Adm</span>
<span class="t" style="left:1873.0px;top:342.00px;font-size:13px;line-height:13px;font-family:'Liberation Serif',serif;">Biaya Adm Bank</span>
<div class="gl" style="left:1278px;top:356px;width:84px"></div>
<div class="gl" style="left:1458px;top:356px;width:226px"></div>
<div class="gl" style="left:1870px;top:356px;width:29px"></div>
<div style="left:0px;top:373px;width:32px;height:1px;background:#c3c3c3;"></div>
<span class="rh" style="left:3.2px;top:360.00px;font-size:12.6px;line-height:12.6px;letter-spacing:-0.11px;">1407</span>
<span class="a" style="left:40.3px;top:360.00px;font-size:12.2px;line-height:12.2px;letter-spacing:-0.10px;">1220</span>
<span style="left:81.8px;top:360.00px;font-size:12px;line-height:12px;"><u style="width:20.5px;transform:scaleX(0.831)">BCA</u><b style="width:6.00px">/</b><u style="width:39.2px;transform:scaleX(0.865)">WARNA</u><b style="width:6.00px">/</b><i style="letter-spacing:1.0px">25</i><b style="width:6.00px">/</b><i style="letter-spacing:1.0px">1409</i></span>
<span style="left:213.3px;top:360.00px;font-size:12px;line-height:12px;"><i style="letter-spacing:1.0px">20</i><b style="width:6.00px">/</b><i style="letter-spacing:1.0px">09</i><b style="width:6.00px">/</b><i style="letter-spacing:1.0px">2025</i></span>
<span style="left:301.0px;top:360.00px;font-size:12px;line-height:12px;"><i style="letter-spacing:1.0px">2009</i><b style="width:6.00px">/</b><u style="width:33.4px;transform:scaleX(0.894)">FTSCY</u><b style="width:6.00px">/</b><u style="width:17.4px;transform:scaleX(0.967)">WS</u><i style="letter-spacing:0.9px">9505120000000.00</i><u style="width:19.0px;transform:scaleX(0.950)">WD</u><i style="letter-spacing:1.0px">365645802</i><u style="width:237.3px;transform:scaleX(0.954)"> TKPD T KPDIDLCPJLLFE pay TOKOPEDIA PT</u></span>
<span style="left:934.3px;top:360.00px;font-size:11.5px;line-height:11.5px;letter-spacing:0.76px;">20.000.000,00</span>
<span style="left:1207.5px;top:360.00px;font-size:12.3px;line-height:12.3px;letter-spacing:0.50px;">618.906.049</span>
<span class="t" style="left:1301.0px;top:360.00px;font-size:12px;line-height:12px;font-family:'Liberation Serif',serif;">1000.03</span>
<span class="t" style="left:1390.8px;top:360.00px;font-size:12px;line-height:12px;font-family:'Liberation Serif',serif;">4000.01</span>
<span class="t" style="left:1460.0px;top:359.00px;font-size:13px;line-height:13px;font-family:'Liberation Serif',serif;max-width:224px;overflow:hidden;"> - Penjualan</span>
<span class="t" style="left:1873.0px;top:359.00px;font-size:13px;line-height:13px;font-family:'Liberation Serif',serif;">Penjualan</span>
<div class="gl" style="left:1278px;top:373px;width:84px"></div>
<div class="gl" style="left:1458px;top:373px;width:226px"></div>
<div class="gl" style="left:1870px;top:373px;width:29px"></div>
<div style="left:0px;top:390px;width:32px;height:1px;background:#c3c3c3;"></div>
<span class="rh" style="left:3.2px;top:377.00px;font-size:12.6px;line-height:12.6px;letter-spacing:-0.11px;">1408</span>
<span class="a" style="left:40.3px;top:377.00px;font-size:12.2px;line-height:12.2px;letter-spacing:-0.10px;">1220</span>
<span style="left:81.8px;top:377.00px;font-size:12px;line-height:12px;"><u style="width:20.5px;transform:scaleX(0.831)">BCA</u><b style="width:6.00px">/</b><u style="width:39.2px;transform:scaleX(0.865)">WARNA</u><b style="width:6.00px">/</b><i style="letter-spacing:1.0px">25</i><b style="width:6.00px">/</b><i style="letter-spacing:1.0px">1410</i></span>
<span style="left:213.3px;top:377.00px;font-size:12px;line-height:12px;"><i style="letter-spacing:1.0px">20</i><b style="width:6.00px">/</b><i style="letter-spacing:1.0px">09</i><b style="width:6.00px">/</b><i style="letter-spacing:1.0px">2025</i></span>
<span style="left:301.0px;top:377.00px;font-size:12px;line-height:12px;"><i style="letter-spacing:1.0px">2009</i><b style="width:6.00px">/</b><u style="width:33.4px;transform:scaleX(0.894)">FTSCY</u><b style="width:6.00px">/</b><u style="width:17.4px;transform:scaleX(0.967)">WS</u><i style="letter-spacing:0.9px">95051101000000.00200008203_13996007857684722480275386</i><u style="width:115.7px;transform:scaleX(0.897)">AIRPAY INTERNATION</u></span>
<span style="left:927.3px;top:377.00px;font-size:11.5px;line-height:11.5px;letter-spacing:0.79px;">101.000.000,00</span>
<span style="left:1207.7px;top:377.00px;font-size:12.3px;line-height:12.3px;letter-spacing:0.48px;">719.906.049</span>
<span class="t" style="left:1301.0px;top:377.00px;font-size:12px;line-height:12px;font-family:'Liberation Serif',serif;">1000.03</span>
<span class="t" style="left:1390.8px;top:377.00px;font-size:12px;line-height:12px;font-family:'Liberation Serif',serif;">4000.01</span>
<span class="t" style="left:1460.0px;top:376.00px;font-size:13px;line-height:13px;font-family:'Liberation Serif',serif;max-width:224px;overflow:hidden;"> - Penjualan</span>
<span class="t" style="left:1873.0px;top:376.00px;font-size:13px;line-height:13px;font-family:'Liberation Serif',serif;">Penjualan</span>
<div class="gl" style="left:1278px;top:390px;width:84px"></div>
<div class="gl" style="left:1458px;top:390px;width:226px"></div>
<div class="gl" style="left:1870px;top:390px;width:29px"></div>
<div style="left:0px;top:407px;width:32px;height:1px;background:#c3c3c3;"></div>
<span class="rh" style="left:3.2px;top:394.00px;font-size:12.6px;line-height:12.6px;letter-spacing:-0.11px;">1409</span>
<span class="a" style="left:40.3px;top:394.00px;font-size:12.2px;line-height:12.2px;letter-spacing:-0.10px;">1220</span>
<span style="left:81.8px;top:394.00px;font-size:12px;line-height:12px;"><u style="width:20.5px;transform:scaleX(0.831)">BCA</u><b style="width:6.00px">/</b><u style="width:39.2px;transform:scaleX(0.865)">WARNA</u><b style="width:6.00px">/</b><i style="letter-spacing:1.0px">25</i><b style="width:6.00px">/</b><i style="letter-spacing:1.0px">1411</i></span>
<span style="left:213.3px;top:394.00px;font-size:12px;line-height:12px;"><i style="letter-spacing:1.0px">20</i><b style="width:6.00px">/</b><i style="letter-spacing:1.0px">09</i><b style="width:6.00px">/</b><i style="letter-spacing:1.0px">2025</i></span>
<span style="left:301.0px;top:394.00px;font-size:12px;line-height:12px;"><u style="width:96.1px;transform:scaleX(0.909)">BIF TRANSFER DR </u><i style="letter-spacing:1.0px">002</i><u style="width:108.2px;transform:scaleX(0.914)">MOCH NUROKHMAN</u></span>
<span style="left:957.5px;top:394.00px;font-size:11.5px;line-height:11.5px;letter-spacing:0.76px;">87.000,00</span>
<span style="left:1207.7px;top:394.00px;font-size:12.3px;line-height:12.3px;letter-spacing:0.48px;">719.993.049</span>
<span class="t" style="left:1301.0px;top:394.00px;font-size:12px;line-height:12px;font-family:'Liberation Serif',serif;">1000.03</span>
<span class="t" style="left:1390.8px;top:394.00px;font-size:12px;line-height:12px;font-family:'Liberation Serif',serif;">4000.01</span>
<span class="t" style="left:1460.0px;top:393.00px;font-size:13px;line-height:13px;font-family:'Liberation Serif',serif;max-width:224px;overflow:hidden;"> - Penjualan</span>
<span class="t" style="left:1873.0px;top:393.00px;font-size:13px;line-height:13px;font-family:'Liberation Serif',serif;">Penjualan</span>
<div class="gl" style="left:1278px;top:407px;width:84px"></div>
<div class="gl" style="left:1458px;top:407px;width:226px"></div>
<div class="gl" style="left:1870px;top:407px;width:29px"></div>
<div style="left:0px;top:424px;width:32px;height:1px;background:#c3c3c3;"></div>
<span class="rh" style="left:3.2px;top:411.00px;font-size:12.6px;line-height:12.6px;letter-spacing:-0.11px;">1410</span>
<span class="a" style="left:40.3px;top:411.00px;font-size:12.2px;line-height:12.2px;letter-spacing:-0.10px;">1220</span>
<span style="left:81.8px;top:411.00px;font-size:12px;line-height:12px;"><u style="width:20.5px;transform:scaleX(0.831)">BCA</u><b style="width:6.00px">/</b><u style="width:39.2px;transform:scaleX(0.865)">WARNA</u><b style="width:6.00px">/</b><i style="letter-spacing:1.0px">25</i><b style="width:6.00px">/</b><i style="letter-spacing:1.0px">1412</i></span>
<span style="left:213.3px;top:411.00px;font-size:12px;line-height:12px;"><i style="letter-spacing:1.0px">20</i><b style="width:6.00px">/</b><i style="letter-spacing:1.0px">09</i><b style="width:6.00px">/</b><i style="letter-spacing:1.0px">2025</i></span>
<span style="left:301.0px;top:411.00px;font-size:12px;line-height:12px;"><i style="letter-spacing:1.0px">2009</i><b style="width:6.00px">/</b><u style="width:33.4px;transform:scaleX(0.894)">FTSCY</u><b style="width:6.00px">/</b><u style="width:17.4px;transform:scaleX(0.967)">WS</u><i style="letter-spacing:0.9px">950318471000.00</i><u style="width:241.4px;transform:scaleX(0.988)">bayar pack box sep temberFANY OKVIANSYAH</u></span>
<span style="left:941.4px;top:411.00px;font-size:11.5px;line-height:11.5px;letter-spacing:0.70px;">8.471.000,00</span>
<span style="left:1207.7px;top:411.00px;font-size:12.3px;line-height:12.3px;letter-spacing:0.48px;">728.464.049</span>
<span class="t" style="left:1301.0px;top:411.00px;font-size:12px;line-height:12px;font-family:'Liberation Serif',serif;">1000.03</span>
<span class="t" style="left:1390.8px;top:411.00px;font-size:12px;line-height:12px;font-family:'Liberation Serif',serif;">4000.01</span>
<span class="t" style="left:1460.0px;top:410.00px;font-size:13px;line-height:13px;font-family:'Liberation Serif',serif;max-width:224px;overflow:hidden;"> - Penjualan</span>
<span class="t" style="left:1873.0px;top:410.00px;font-size:13px;line-height:13px;font-family:'Liberation Serif',serif;">Penjualan</span>
<div class="gl" style="left:1278px;top:424px;width:84px"></div>
<div class="gl" style="left:1458px;top:424px;width:226px"></div>
<div class="gl" style="left:1870px;top:424px;width:29px"></div>
<div style="left:0px;top:441px;width:32px;height:1px;background:#c3c3c3;"></div>
<span class="rh" style="left:3.2px;top:428.00px;font-size:12.6px;line-height:12.6px;letter-spacing:-0.11px;">1411</span>
<span class="a" style="left:40.3px;top:428.00px;font-size:12.2px;line-height:12.2px;letter-spacing:-0.10px;">1220</span>
<span style="left:81.8px;top:428.00px;font-size:12px;line-height:12px;"><u style="width:20.5px;transform:scaleX(0.831)">BCA</u><b style="width:6.00px">/</b><u style="width:39.2px;transform:scaleX(0.865)">WARNA</u><b style="width:6.00px">/</b><i style="letter-spacing:1.0px">25</i><b style="width:6.00px">/</b><i style="letter-spacing:1.0px">1413</i></span>
<span style="left:213.3px;top:428.00px;font-size:12px;line-height:12px;"><i style="letter-spacing:1.0px">20</i><b style="width:6.00px">/</b><i style="letter-spacing:1.0px">09</i><b style="width:6.00px">/</b><i style="letter-spacing:1.0px">2025</i></span>
<span style="left:301.0px;top:428.00px;font-size:12px;line-height:12px;"><i style="letter-spacing:1.0px">2009</i><b style="width:6.00px">/</b><u style="width:33.4px;transform:scaleX(0.894)">FTSCY</u><b style="width:6.00px">/</b><u style="width:17.4px;transform:scaleX(0.967)">WS</u><i style="letter-spacing:0.9px">950311951000.00</i><u style="width:208.3px;transform:scaleX(0.962)">kemasan rbdjaya INDRA RAESHA VALEN</u></span>
<span style="left:941.2px;top:428.00px;font-size:11.5px;line-height:11.5px;letter-spacing:0.72px;">1.951.000,00</span>
<span style="left:1207.7px;top:428.00px;font-size:12.3px;line-height:12.3px;letter-spacing:0.48px;">730.415.049</span>
<span class="t" style="left:1301.0px;top:428.00px;font-size:12px;line-height:12px;font-family:'Liberation Serif',serif;">1000.03</span>
<span class="t" style="left:1390.8px;top:428.00px;font-size:12px;line-height:12px;font-family:'Liberation Serif',serif;">4000.01</span>
<span class="t" style="left:1460.0px;top:427.00px;font-size:13px;line-height:13px;font-family:'Liberation Serif',serif;max-width:224px;overflow:hidden;"> - Penjualan</span>
<span class="t" style="left:1873.0px;top:427.00px;font-size:13px;line-height:13px;font-family:'Liberation Serif',serif;">Penjualan</span>
<div class="gl" style="left:1278px;top:441px;width:84px"></div>
<div class="gl" style="left:1458px;top:441px;width:226px"></div>
<div class="gl" style="left:1870px;top:441px;width:29px"></div>
<div style="left:0px;top:458px;width:32px;height:1px;background:#c3c3c3;"></div>
<span class="rh" style="left:3.2px;top:445.00px;font-size:12.6px;line-height:12.6px;letter-spacing:-0.11px;">1412</span>
<span class="a" style="left:40.3px;top:445.00px;font-size:12.2px;line-height:12.2px;letter-spacing:-0.10px;">1252</span>
<span style="left:81.8px;top:445.00px;font-size:12px;line-height:12px;"><u style="width:20.5px;transform:scaleX(0.831)">BCA</u><b style="width:6.00px">/</b><u style="width:39.2px;transform:scaleX(0.865)">WARNA</u><b style="width:6.00px">/</b><i style="letter-spacing:1.0px">25</i><b style="width:6.00px">/</b><i style="letter-spacing:1.0px">1414</i></span>
<span style="left:213.3px;top:445.00px;font-size:12px;line-height:12px;"><i style="letter-spacing:1.0px">20</i><b style="width:6.00px">/</b><i style="letter-spacing:1.0px">09</i></span>
<span style="left:301.0px;top:445.00px;font-size:12px;line-height:12px;"><i style="letter-spacing:1.0px">2009</i><b style="width:6.00px">/</b><u style="width:33.4px;transform:scaleX(0.894)">FTSCY</u><b style="width:6.00px">/</b><u style="width:17.4px;transform:scaleX(0.967)">WS</u><i style="letter-spacing:0.9px">950512300000.00</i><u style="width:115.2px;transform:scaleX(0.877)">NOVAN ADI PRIYATNA</u></span>
<span style="left:1099.2px;top:445.00px;font-size:11.5px;line-height:11.5px;letter-spacing:0.72px;">2.300.000,00</span>
<span style="left:1207.7px;top:445.00px;font-size:12.3px;line-height:12.3px;letter-spacing:0.48px;">728.115.049</span>
<span class="t" style="left:1301.0px;top:445.00px;font-size:12px;line-height:12px;font-family:'Liberation Serif',serif;">1000.03</span>
<span class="t" style="left:1390.8px;top:445.00px;font-size:12px;line-height:12px;font-family:'Liberation Serif',serif;">2100.02</span>
<span class="t" style="left:1460.0px;top:444.00px;font-size:13px;line-height:13px;letter-spacing:0.05px;font-family:'Liberation Serif',serif;max-width:224px;overflow:hidden;">Novan Adi Priyatna - Hutang Direksi</span>
<span class="t" style="left:1687.0px;top:444.00px;font-size:13px;line-height:13px;letter-spacing:0.16px;font-family:'Liberation Serif',serif;">Novan Adi Priyatna</span>
<span class="t" style="left:1873.0px;top:444.00px;font-size:13px;line-height:13px;font-family:'Liberation Serif',serif;">Hutang Direksi</span>
<div class="gl" style="left:1278px;top:458px;width:84px"></div>
<div class="gl" style="left:1458px;top:458px;width:226px"></div>
<div class="gl" style="left:1870px;top:458px;width:29px"></div>
<div style="left:0px;top:475px;width:32px;height:1px;background:#c3c3c3;"></div>
<span class="rh" style="left:3.2px;top:462.00px;font-size:12.6px;line-height:12.6px;letter-spacing:-0.11px;">1413</span>
<span class="a" style="left:40.3px;top:462.00px;font-size:12.2px;line-height:12.2px;letter-spacing:-0.10px;">1220</span>
<span style="left:81.8px;top:462.00px;font-size:12px;line-height:12px;"><u style="width:20.5px;transform:scaleX(0.831)">BCA</u><b style="width:6.00px">/</b><u style="width:39.2px;transform:scaleX(0.865)">WARNA</u><b style="width:6.00px">/</b><i style="letter-spacing:1.0px">25</i><b style="width:6.00px">/</b><i style="letter-spacing:1.0px">1415</i></span>
<span style="left:213.3px;top:462.00px;font-size:12px;line-height:12px;"><i style="letter-spacing:1.0px">20</i><b style="width:6.00px">/</b><i style="letter-spacing:1.0px">09</i><b style="width:6.00px">/</b><i style="letter-spacing:1.0px">2025</i></span>
<span style="left:301.0px;top:462.00px;font-size:12px;line-height:12px;"><u style="width:96.1px;transform:scaleX(0.909)">BIF TRANSFER DR </u><i style="letter-spacing:1.0px">013</i><u style="width:96.6px;transform:scaleX(0.892)">AGUNG PRASETYO</u></span>
<span style="left:950.5px;top:462.00px;font-size:11.5px;line-height:11.5px;letter-spacing:0.80px;">718.800,00</span>
<span style="left:1207.7px;top:462.00px;font-size:12.3px;line-height:12.3px;letter-spacing:0.48px;">728.833.849</span>
<span class="t" style="left:1301.0px;top:462.00px;font-size:12px;line-height:12px;font-family:'Liberation Serif',serif;">1000.03</span>
<span class="t" style="left:1390.8px;top:462.00px;font-size:12px;line-height:12px;font-family:'Liberation Serif',serif;">4000.01</span>
<span class="t" style="left:1460.0px;top:461.00px;font-size:13px;line-height:13px;letter-spacing:0.15px;font-family:'Liberation Serif',serif;max-width:224px;overflow:hidden;">Agung Prrasetyo - Penjualan</span>
<span class="t" style="left:1687.0px;top:461.00px;font-size:13px;line-height:13px;letter-spacing:0.30px;font-family:'Liberation Serif',serif;">Agung Prrasetyo</span>
<span class="t" style="left:1873.0px;top:461.00px;font-size:13px;line-height:13px;font-family:'Liberation Serif',serif;">Penjualan</span>
<div class="gl" style="left:1278px;top:475px;width:84px"></div>
<div class="gl" style="left:1458px;top:475px;width:226px"></div>
<div class="gl" style="left:1870px;top:475px;width:29px"></div>
<div style="left:0px;top:492px;width:32px;height:1px;background:#c3c3c3;"></div>
<span class="rh" style="left:3.2px;top:479.00px;font-size:12.6px;line-height:12.6px;letter-spacing:-0.11px;">1414</span>
<span class="a" style="left:40.3px;top:479.00px;font-size:12.2px;line-height:12.2px;letter-spacing:-0.10px;">1254</span>
<span style="left:81.8px;top:479.00px;font-size:12px;line-height:12px;"><u style="width:20.5px;transform:scaleX(0.831)">BCA</u><b style="width:6.00px">/</b><u style="width:39.2px;transform:scaleX(0.865)">WARNA</u><b style="width:6.00px">/</b><i style="letter-spacing:1.0px">25</i><b style="width:6.00px">/</b><i style="letter-spacing:1.0px">1416</i></span>
<span style="left:213.3px;top:479.00px;font-size:12px;line-height:12px;"><i style="letter-spacing:1.0px">21</i><b style="width:6.00px">/</b><i style="letter-spacing:1.0px">09</i></span>
<span style="left:301.0px;top:479.00px;font-size:12px;line-height:12px;"><i style="letter-spacing:1.0px">2109</i><b style="width:6.00px">/</b><u style="width:33.4px;transform:scaleX(0.894)">FTSCY</u><b style="width:6.00px">/</b><u style="width:17.4px;transform:scaleX(0.967)">WS</u><i style="letter-spacing:0.9px">950515000000.00</i><u style="width:99.4px;transform:scaleX(0.895)">NANA SEPTIANSAH</u></span>
<span style="left:1099.2px;top:479.00px;font-size:11.5px;line-height:11.5px;letter-spacing:0.72px;">5.000.000,00</span>
<span style="left:1207.7px;top:479.00px;font-size:12.3px;line-height:12.3px;letter-spacing:0.48px;">723.833.849</span>
<span class="t" style="left:1301.0px;top:479.00px;font-size:12px;line-height:12px;font-family:'Liberation Serif',serif;">1000.03</span>
<span class="t" style="left:1390.8px;top:479.00px;font-size:12px;line-height:12px;font-family:'Liberation Serif',serif;">5000.01</span>
<span class="t" style="left:1460.0px;top:478.00px;font-size:13px;line-height:13px;font-family:'Liberation Serif',serif;max-width:224px;overflow:hidden;"> -</span>
<div class="gl" style="left:1278px;top:492px;width:84px"></div>
<div class="gl" style="left:1458px;top:492px;width:226px"></div>
<div style="left:0px;top:509px;width:32px;height:1px;background:#c3c3c3;"></div>
<span class="rh" style="left:3.2px;top:496.00px;font-size:12.6px;line-height:12.6px;letter-spacing:-0.11px;">1415</span>
<span class="a" style="left:40.3px;top:496.00px;font-size:12.2px;line-height:12.2px;letter-spacing:-0.10px;">1255</span>
<span style="left:81.9px;top:496.00px;font-size:12px;line-height:12px;"><u style="width:20.5px;transform:scaleX(0.831)">BCA</u><b style="width:6.00px">/</b><u style="width:39.2px;transform:scaleX(0.865)">WARNA</u><b style="width:6.00px">/</b><i style="letter-spacing:1.0px">25</i><b style="width:6.00px">/</b><i style="letter-spacing:1.0px">1417</i></span>
<span style="left:213.3px;top:496.00px;font-size:12px;line-height:12px;"><i style="letter-spacing:1.0px">21</i><b style="width:6.00px">/</b><i style="letter-spacing:1.0px">09</i></span>
<span style="left:301.0px;top:496.00px;font-size:12px;line-height:12px;"><i style="letter-spacing:1.0px">2109</i><b style="width:6.00px">/</b><u style="width:33.4px;transform:scaleX(0.894)">FTSCY</u><b style="width:6.00px">/</b><u style="width:17.4px;transform:scaleX(0.967)">WS</u><i style="letter-spacing:0.9px">9505124605029.70</i><u style="width:114.2px;transform:scaleX(0.921)">ULTIMA SOLUSI PAPE</u></span>
<span style="left:1092.4px;top:496.00px;font-size:11.5px;line-height:11.5px;letter-spacing:0.74px;">24.605.029,70</span>
<span style="left:1207.5px;top:496.00px;font-size:12.3px;line-height:12.3px;letter-spacing:0.50px;">699.228.819</span>
<span class="t" style="left:1301.0px;top:496.00px;font-size:12px;line-height:12px;font-family:'Liberation Serif',serif;">1000.03</span>
<span class="t" style="left:1390.8px;top:496.00px;font-size:12px;line-height:12px;font-family:'Liberation Serif',serif;">5000.01</span>
<span class="t" style="left:1460.0px;top:495.00px;font-size:13px;line-height:13px;font-family:'Liberation Serif',serif;max-width:224px;overflow:hidden;"> -</span>
<div class="gl" style="left:1278px;top:509px;width:84px"></div>
<div class="gl" style="left:1458px;top:509px;width:226px"></div>
<div style="left:0px;top:526px;width:32px;height:1px;background:#c3c3c3;"></div>
<span class="rh" style="left:3.2px;top:513.00px;font-size:12.6px;line-height:12.6px;letter-spacing:-0.11px;">1416</span>
<span class="a" style="left:40.3px;top:513.00px;font-size:12.2px;line-height:12.2px;letter-spacing:-0.10px;">1256</span>
<span style="left:81.8px;top:513.00px;font-size:12px;line-height:12px;"><u style="width:20.5px;transform:scaleX(0.831)">BCA</u><b style="width:6.00px">/</b><u style="width:39.2px;transform:scaleX(0.865)">WARNA</u><b style="width:6.00px">/</b><i style="letter-spacing:1.0px">25</i><b style="width:6.00px">/</b><i style="letter-spacing:1.0px">1418</i></span>
<span style="left:213.3px;top:513.00px;font-size:12px;line-height:12px;"><i style="letter-spacing:1.0px">22</i><b style="width:6.00px">/</b><i style="letter-spacing:1.0px">09</i></span>
<span style="left:301.0px;top:513.00px;font-size:12px;line-height:12px;"><i style="letter-spacing:1.0px">2209</i><b style="width:6.00px">/</b><u style="width:33.4px;transform:scaleX(0.894)">FTSCY</u><b style="width:6.00px">/</b><u style="width:17.4px;transform:scaleX(0.967)">WS</u><i style="letter-spacing:0.9px">950516240000.00</i><u style="width:38.6px;transform:scaleX(0.919)">HENNY</u></span>
<span style="left:1099.2px;top:513.00px;font-size:11.5px;line-height:11.5px;letter-spacing:0.72px;">6.240.000,00</span>
<span style="left:1207.5px;top:513.00px;font-size:12.3px;line-height:12.3px;letter-spacing:0.50px;">692.988.819</span>
<span class="t" style="left:1301.0px;top:513.00px;font-size:12px;line-height:12px;font-family:'Liberation Serif',serif;">1000.03</span>
<span class="t" style="left:1390.8px;top:513.00px;font-size:12px;line-height:12px;font-family:'Liberation Serif',serif;">5000.01</span>
<span class="t" style="left:1460.0px;top:512.00px;font-size:13px;line-height:13px;font-family:'Liberation Serif',serif;max-width:224px;overflow:hidden;"> -</span>
<div class="gl" style="left:1278px;top:526px;width:84px"></div>
<div class="gl" style="left:1458px;top:526px;width:226px"></div>
<div style="left:0px;top:543px;width:32px;height:1px;background:#c3c3c3;"></div>
<span class="rh" style="left:3.2px;top:530.00px;font-size:12.6px;line-height:12.6px;letter-spacing:-0.11px;">1417</span>
<span class="a" style="left:40.3px;top:530.00px;font-size:12.2px;line-height:12.2px;letter-spacing:-0.10px;">1220</span>
<span style="left:81.8px;top:530.00px;font-size:12px;line-height:12px;"><u style="width:20.5px;transform:scaleX(0.831)">BCA</u><b style="width:6.00px">/</b><u style="width:39.2px;transform:scaleX(0.865)">WARNA</u><b style="width:6.00px">/</b><i style="letter-spacing:1.0px">25</i><b style="width:6.00px">/</b><i style="letter-spacing:1.0px">1419</i></span>
<span style="left:213.3px;top:530.00px;font-size:12px;line-height:12px;"><i style="letter-spacing:1.0px">22</i><b style="width:6.00px">/</b><i style="letter-spacing:1.0px">09</i><b style="width:6.00px">/</b><i style="letter-spacing:1.0px">2025</i></span>
<span style="left:301.0px;top:530.00px;font-size:12px;line-height:12px;"><i style="letter-spacing:1.0px">2209</i><b style="width:6.00px">/</b><u style="width:33.4px;transform:scaleX(0.894)">FTSCY</u><b style="width:6.00px">/</b><u style="width:17.4px;transform:scaleX(0.967)">WS</u><i style="letter-spacing:0.9px">950314745000.00</i><u style="width:115.2px;transform:scaleX(0.877)">NOVAN ADI PRIYATNA</u></span>
<span style="left:941.4px;top:530.00px;font-size:11.5px;line-height:11.5px;letter-spacing:0.70px;">4.745.000,00</span>
<span style="left:1207.9px;top:530.00px;font-size:12.3px;line-height:12.3px;letter-spacing:0.46px;">697.733.819</span>
<span class="t" style="left:1301.0px;top:530.00px;font-size:12px;line-height:12px;font-family:'Liberation Serif',serif;">1000.03</span>
<span class="t" style="left:1390.8px;top:530.00px;font-size:12px;line-height:12px;font-family:'Liberation Serif',serif;">2100.02</span>
<span class="t" style="left:1460.0px;top:529.00px;font-size:13px;line-height:13px;letter-spacing:0.05px;font-family:'Liberation Serif',serif;max-width:224px;overflow:hidden;">Novan Adi Priyatna - Hutang Direksi</span>
<span class="t" style="left:1687.0px;top:529.00px;font-size:13px;line-height:13px;letter-spacing:0.16px;font-family:'Liberation Serif',serif;">Novan Adi Priyatna</span>
<span class="t" style="left:1873.0px;top:529.00px;font-size:13px;line-height:13px;font-family:'Liberation Serif',serif;">Hutang Direksi</span>
<div class="gl" style="left:1278px;top:543px;width:84px"></div>
<div class="gl" style="left:1458px;top:543px;width:226px"></div>
<div class="gl" style="left:1870px;top:543px;width:29px"></div>
<div style="left:0px;top:560px;width:32px;height:1px;background:#c3c3c3;"></div>
<span class="rh" style="left:3.2px;top:547.00px;font-size:12.6px;line-height:12.6px;letter-spacing:-0.11px;">1418</span>
<span class="a" style="left:40.3px;top:547.00px;font-size:12.2px;line-height:12.2px;letter-spacing:-0.10px;">1258</span>
<span style="left:81.8px;top:547.00px;font-size:12px;line-height:12px;"><u style="width:20.5px;transform:scaleX(0.831)">BCA</u><b style="width:6.00px">/</b><u style="width:39.2px;transform:scaleX(0.865)">WARNA</u><b style="width:6.00px">/</b><i style="letter-spacing:1.0px">25</i><b style="width:6.00px">/</b><i style="letter-spacing:1.0px">1420</i></span>
<span style="left:213.3px;top:547.00px;font-size:12px;line-height:12px;"><i style="letter-spacing:1.0px">22</i><b style="width:6.00px">/</b><i style="letter-spacing:1.0px">09</i></span>
<span style="left:301.0px;top:547.00px;font-size:12px;line-height:12px;"><i style="letter-spacing:1.0px">2209</i><b style="width:6.00px">/</b><u style="width:32.5px;transform:scaleX(0.855)">FTFVA</u><b style="width:6.00px">/</b><u style="width:17.4px;transform:scaleX(0.967)">WS</u><i style="letter-spacing:1.0px">9505112716</i><b style="width:6.00px">/</b><u style="width:79.5px;transform:scaleX(0.880)">SENTRAL CARG</u>-- <i style="letter-spacing:1.0px">00068528</i></span>
<span style="left:1108.3px;top:547.00px;font-size:11.5px;line-height:11.5px;letter-spacing:0.82px;">368.000,00</span>
<span style="left:1207.7px;top:547.00px;font-size:12.3px;line-height:12.3px;letter-spacing:0.48px;">697.365.819</span>
<span class="t" style="left:1301.0px;top:547.00px;font-size:12px;line-height:12px;font-family:'Liberation Serif',serif;">1000.03</span>
<span class="t" style="left:1390.8px;top:547.00px;font-size:12px;line-height:12px;font-family:'Liberation Serif',serif;">6203.05</span>
<span class="t" style="left:1460.0px;top:546.00px;font-size:13px;line-height:13px;font-family:'Liberation Serif',serif;max-width:224px;overflow:hidden;"> -</span>
<div class="gl" style="left:1278px;top:560px;width:84px"></div>
<div class="gl" style="left:1458px;top:560px;width:226px"></div>
<div style="left:0px;top:577px;width:32px;height:1px;background:#c3c3c3;"></div>
<span class="rh" style="left:3.2px;top:564.00px;font-size:12.6px;line-height:12.6px;letter-spacing:-0.11px;">1419</span>
<span class="a" style="left:40.3px;top:564.00px;font-size:12.2px;line-height:12.2px;letter-spacing:-0.10px;">1220</span>
<span style="left:81.8px;top:564.00px;font-size:12px;line-height:12px;"><u style="width:20.5px;transform:scaleX(0.831)">BCA</u><b style="width:6.00px">/</b><u style="width:39.2px;transform:scaleX(0.865)">WARNA</u><b style="width:6.00px">/</b><i style="letter-spacing:1.0px">25</i><b style="width:6.00px">/</b><i style="letter-spacing:1.0px">1421</i></span>
<span style="left:213.3px;top:564.00px;font-size:12px;line-height:12px;"><i style="letter-spacing:1.0px">23</i><b style="width:6.00px">/</b><i style="letter-spacing:1.0px">09</i><b style="width:6.00px">/</b><i style="letter-spacing:1.0px">2025</i></span>
<span style="left:301.0px;top:564.00px;font-size:12px;line-height:12px;"><i style="letter-spacing:1.0px">2309</i><b style="width:6.00px">/</b><u style="width:33.4px;transform:scaleX(0.894)">FTSCY</u><b style="width:6.00px">/</b><u style="width:17.4px;transform:scaleX(0.967)">WS</u><i style="letter-spacing:0.9px">95031650000.00</i><u style="width:66.0px;transform:scaleX(0.921)">ELISA PUTRI</u></span>
<span style="left:950.3px;top:564.00px;font-size:11.5px;line-height:11.5px;letter-spacing:0.82px;">650.000,00</span>
<span style="left:1207.5px;top:564.00px;font-size:12.3px;line-height:12.3px;letter-spacing:0.50px;">698.015.819</span>
<span class="t" style="left:1301.0px;top:564.00px;font-size:12px;line-height:12px;font-family:'Liberation Serif',serif;">1000.03</span>
<span class="t" style="left:1390.8px;top:564.00px;font-size:12px;line-height:12px;font-family:'Liberation Serif',serif;">4000.01</span>
<span class="t" style="left:1460.0px;top:563.00px;font-size:13px;line-height:13px;font-family:'Liberation Serif',serif;max-width:224px;overflow:hidden;"> - Penjualan</span>
<span class="t" style="left:1873.0px;top:563.00px;font-size:13px;line-height:13px;font-family:'Liberation Serif',serif;">Penjualan</span>
<div class="gl" style="left:1278px;top:577px;width:84px"></div>
<div class="gl" style="left:1458px;top:577px;width:226px"></div>
<div class="gl" style="left:1870px;top:577px;width:29px"></div>
<div style="left:0px;top:594px;width:32px;height:1px;background:#c3c3c3;"></div>
<span class="rh" style="left:3.2px;top:581.00px;font-size:12.6px;line-height:12.6px;letter-spacing:-0.11px;">1420</span>
<span class="a" style="left:40.3px;top:581.00px;font-size:12.2px;line-height:12.2px;letter-spacing:-0.10px;">1220</span>
<span style="left:81.8px;top:581.00px;font-size:12px;line-height:12px;"><u style="width:20.5px;transform:scaleX(0.831)">BCA</u><b style="width:6.00px">/</b><u style="width:39.2px;transform:scaleX(0.865)">WARNA</u><b style="width:6.00px">/</b><i style="letter-spacing:1.0px">25</i><b style="width:6.00px">/</b><i style="letter-spacing:1.0px">1422</i></span>
<span style="left:213.3px;top:581.00px;font-size:12px;line-height:12px;"><i style="letter-spacing:1.0px">24</i><b style="width:6.00px">/</b><i style="letter-spacing:1.0px">09</i><b style="width:6.00px">/</b><i style="letter-spacing:1.0px">2025</i></span>
<span style="left:301.0px;top:581.00px;font-size:12px;line-height:12px;"><u style="width:96.1px;transform:scaleX(0.909)">BIF TRANSFER DR </u><i style="letter-spacing:1.0px">008</i><u style="width:110.3px;transform:scaleX(0.919)">RIKI MARTINO SULIS</u></span>
<span style="left:941.2px;top:581.00px;font-size:11.5px;line-height:11.5px;letter-spacing:0.72px;">1.000.000,00</span>
<span style="left:1207.5px;top:581.00px;font-size:12.3px;line-height:12.3px;letter-spacing:0.50px;">699.015.819</span>
<span class="t" style="left:1301.0px;top:581.00px;font-size:12px;line-height:12px;font-family:'Liberation Serif',serif;">1000.03</span>
<span class="t" style="left:1390.8px;top:581.00px;font-size:12px;line-height:12px;font-family:'Liberation Serif',serif;">4000.01</span>
<span class="t" style="left:1460.0px;top:580.00px;font-size:13px;line-height:13px;font-family:'Liberation Serif',serif;max-width:224px;overflow:hidden;"> - Penjualan</span>
<span class="t" style="left:1873.0px;top:580.00px;font-size:13px;line-height:13px;font-family:'Liberation Serif',serif;">Penjualan</span>
<div class="gl" style="left:1278px;top:594px;width:84px"></div>
<div class="gl" style="left:1458px;top:594px;width:226px"></div>
<div class="gl" style="left:1870px;top:594px;width:29px"></div>
<div style="left:0px;top:611px;width:32px;height:1px;background:#c3c3c3;"></div>
<span class="rh" style="left:3.2px;top:598.00px;font-size:12.6px;line-height:12.6px;letter-spacing:-0.11px;">1421</span>
<span class="a" style="left:40.3px;top:598.00px;font-size:12.2px;line-height:12.2px;letter-spacing:-0.10px;">1220</span>
<span style="left:81.8px;top:598.00px;font-size:12px;line-height:12px;"><u style="width:20.5px;transform:scaleX(0.831)">BCA</u><b style="width:6.00px">/</b><u style="width:39.2px;transform:scaleX(0.865)">WARNA</u><b style="width:6.00px">/</b><i style="letter-spacing:1.0px">25</i><b style="width:6.00px">/</b><i style="letter-spacing:1.0px">1423</i></span>
<span style="left:213.3px;top:598.00px;font-size:12px;line-height:12px;"><i style="letter-spacing:1.0px">24</i><b style="width:6.00px">/</b><i style="letter-spacing:1.0px">09</i><b style="width:6.00px">/</b><i style="letter-spacing:1.0px">2025</i></span>
<span style="left:301.0px;top:598.00px;font-size:12px;line-height:12px;"><u style="width:96.1px;transform:scaleX(0.909)">BIF TRANSFER DR </u><i style="letter-spacing:1.0px">009</i><u style="width:120.7px;transform:scaleX(0.875)">RADA KELUARGA BERK</u></span>
<span style="left:941.4px;top:598.00px;font-size:11.5px;line-height:11.5px;letter-spacing:0.70px;">1.227.000,00</span>
<span style="left:1207.7px;top:598.00px;font-size:12.3px;line-height:12.3px;letter-spacing:0.48px;">700.242.819</span>
<span class="t" style="left:1301.0px;top:598.00px;font-size:12px;line-height:12px;font-family:'Liberation Serif',serif;">1000.03</span>
<span class="t" style="left:1390.8px;top:598.00px;font-size:12px;line-height:12px;font-family:'Liberation Serif',serif;">4000.01</span>
<span class="t" style="left:1460.0px;top:597.00px;font-size:13px;line-height:13px;font-family:'Liberation Serif',serif;max-width:224px;overflow:hidden;"> - Penjualan</span>
<span class="t" style="left:1873.0px;top:597.00px;font-size:13px;line-height:13px;font-family:'Liberation Serif',serif;">Penjualan</span>
<div class="gl" style="left:1278px;top:611px;width:84px"></div>
<div class="gl" style="left:1458px;top:611px;width:226px"></div>
<div class="gl" style="left:1870px;top:611px;width:29px"></div>
<div style="left:0px;top:628px;width:32px;height:1px;background:#c3c3c3;"></div>
<span class="rh" style="left:3.2px;top:615.00px;font-size:12.6px;line-height:12.6px;letter-spacing:-0.11px;">1422</span>
<span class="a" style="left:40.3px;top:615.00px;font-size:12.2px;line-height:12.2px;letter-spacing:-0.10px;">1220</span>
<span style="left:81.8px;top:615.00px;font-size:12px;line-height:12px;"><u style="width:20.5px;transform:scaleX(0.831)">BCA</u><b style="width:6.00px">/</b><u style="width:39.2px;transform:scaleX(0.865)">WARNA</u><b style="width:6.00px">/</b><i style="letter-spacing:1.0px">25</i><b style="width:6.00px">/</b><i style="letter-spacing:1.0px">1424</i></span>
<span style="left:213.3px;top:615.00px;font-size:12px;line-height:12px;"><i style="letter-spacing:1.0px">24</i><b style="width:6.00px">/</b><i style="letter-spacing:1.0px">09</i><b style="width:6.00px">/</b><i style="letter-spacing:1.0px">2025</i></span>
<span style="left:301.0px;top:615.00px;font-size:12px;line-height:12px;"><i style="letter-spacing:1.0px">2409</i><b style="width:6.00px">/</b><u style="width:33.4px;transform:scaleX(0.894)">FTSCY</u><b style="width:6.00px">/</b><u style="width:17.4px;transform:scaleX(0.967)">WS</u><i style="letter-spacing:0.9px">95051925000.00</i></span>
<span style="left:950.3px;top:615.00px;font-size:11.5px;line-height:11.5px;letter-spacing:0.82px;">925.000,00</span>
<span style="left:1207.9px;top:615.00px;font-size:12.3px;line-height:12.3px;letter-spacing:0.46px;">701.167.819</span>
<span class="t" style="left:1301.0px;top:615.00px;font-size:12px;line-height:12px;font-family:'Liberation Serif',serif;">1000.03</span>
<span class="t" style="left:1390.8px;top:615.00px;font-size:12px;line-height:12px;font-family:'Liberation Serif',serif;">4000.01</span>
<span class="t" style="left:1460.0px;top:614.00px;font-size:13px;line-height:13px;font-family:'Liberation Serif',serif;max-width:224px;overflow:hidden;"> - Penjualan</span>
<span class="t" style="left:1873.0px;top:614.00px;font-size:13px;line-height:13px;font-family:'Liberation Serif',serif;">Penjualan</span>
<div class="gl" style="left:1278px;top:628px;width:84px"></div>
<div class="gl" style="left:1458px;top:628px;width:226px"></div>
<div class="gl" style="left:1870px;top:628px;width:29px"></div>
<div style="left:0px;top:645px;width:32px;height:1px;background:#c3c3c3;"></div>
<span class="rh" style="left:3.2px;top:632.00px;font-size:12.6px;line-height:12.6px;letter-spacing:-0.11px;">1423</span>
<span class="a" style="left:40.3px;top:632.00px;font-size:12.2px;line-height:12.2px;letter-spacing:-0.10px;">1263</span>
<span style="left:74.8px;top:632.00px;font-size:12px;line-height:12px;"><u style="width:20.5px;transform:scaleX(0.831)">BCA</u><b style="width:6.00px">/</b><u style="width:39.2px;transform:scaleX(0.865)">WARNA</u><b style="width:6.00px">/</b><i style="letter-spacing:1.0px">25</i><b style="width:6.00px">/</b><i style="letter-spacing:1.0px">1425</i></span>
<span style="left:213.3px;top:632.00px;font-size:12px;line-height:12px;"><i style="letter-spacing:1.0px">24</i><b style="width:6.00px">/</b><i style="letter-spacing:1.0px">09</i><b style="width:6.00px">/</b><i style="letter-spacing:1.0px">2025</i></span>
<span style="left:301.0px;top:632.00px;font-size:12px;line-height:12px;"><i style="letter-spacing:1.0px">2025092427362097</i><u style="width:36.2px;transform:scaleX(0.920)">TRFDN</u>-<u style="width:190.1px;transform:scaleX(0.917)">NURUL LAELI ESPAY DEBIT INDONE</u></span>
<span style="left:1207.9px;top:632.00px;font-size:12.3px;line-height:12.3px;letter-spacing:0.46px;">701.167.819</span>
<span class="t" style="left:1301.0px;top:632.00px;font-size:12px;line-height:12px;font-family:'Liberation Serif',serif;">1000.03</span>
<span class="t" style="left:1460.0px;top:631.00px;font-size:13px;line-height:13px;letter-spacing:-0.05px;font-family:'Liberation Serif',serif;max-width:224px;overflow:hidden;">Penerimaan Negara - Biaya Pajak</span>
<span class="t" style="left:1687.0px;top:631.00px;font-size:13px;line-height:13px;letter-spacing:0.02px;font-family:'Liberation Serif',serif;">Penerimaan Negara</span>
<span class="t" style="left:1873.0px;top:631.00px;font-size:13px;line-height:13px;font-family:'Liberation Serif',serif;">Biaya Adm Bank</span>
<div class="gl" style="left:1278px;top:645px;width:84px"></div>
<div class="gl" style="left:1458px;top:645px;width:226px"></div>
<div class="gl" style="left:1870px;top:645px;width:29px"></div>
<div style="left:0px;top:662px;width:32px;height:1px;background:#c3c3c3;"></div>
<span class="rh" style="left:3.2px;top:649.00px;font-size:12.6px;line-height:12.6px;letter-spacing:-0.11px;">1424</span>
<span class="a" style="left:40.3px;top:649.00px;font-size:12.2px;line-height:12.2px;letter-spacing:-0.10px;">1264</span>
<span style="left:81.8px;top:649.00px;font-size:12px;line-height:12px;"><u style="width:20.5px;transform:scaleX(0.831)">BCA</u><b style="width:6.00px">/</b><u style="width:39.2px;transform:scaleX(0.865)">WARNA</u><b style="width:6.00px">/</b><i style="letter-spacing:1.0px">25</i><b style="width:6.00px">/</b><i style="letter-spacing:1.0px">1426</i></span>
<span style="left:213.3px;top:649.00px;font-size:12px;line-height:12px;"><i style="letter-spacing:1.0px">24</i><b style="width:6.00px">/</b><i style="letter-spacing:1.0px">09</i></span>
<span style="left:301.0px;top:649.00px;font-size:12px;line-height:12px;"><u style="width:96.6px;transform:scaleX(0.920)">BIF TRANSFER KE </u><i style="letter-spacing:1.0px">008</i><u style="width:141.3px;transform:scaleX(0.887)">DARA BANCA INDONESKBB</u></span>
<span style="left:1092.3px;top:649.00px;font-size:11.5px;line-height:11.5px;letter-spacing:0.76px;">12.296.255,40</span>
<span style="left:1207.7px;top:649.00px;font-size:12.3px;line-height:12.3px;letter-spacing:0.48px;">688.871.564</span>
<span class="t" style="left:1301.0px;top:649.00px;font-size:12px;line-height:12px;font-family:'Liberation Serif',serif;">1000.03</span>
<span class="t" style="left:1390.8px;top:649.00px;font-size:12px;line-height:12px;font-family:'Liberation Serif',serif;">5000.01</span>
<span class="t" style="left:1460.0px;top:648.00px;font-size:13px;line-height:13px;font-family:'Liberation Serif',serif;max-width:224px;overflow:hidden;"> -</span>
<div class="gl" style="left:1278px;top:662px;width:84px"></div>
<div class="gl" style="left:1458px;top:662px;width:226px"></div>
<div style="left:0px;top:679px;width:32px;height:1px;background:#c3c3c3;"></div>
<span class="rh" style="left:3.2px;top:666.00px;font-size:12.6px;line-height:12.6px;letter-spacing:-0.11px;">1425</span>
<span class="a" style="left:40.3px;top:666.00px;font-size:12.2px;line-height:12.2px;letter-spacing:-0.10px;">1265</span>
<span style="left:81.9px;top:666.00px;font-size:12px;line-height:12px;"><u style="width:20.5px;transform:scaleX(0.831)">BCA</u><b style="width:6.00px">/</b><u style="width:39.2px;transform:scaleX(0.865)">WARNA</u><b style="width:6.00px">/</b><i style="letter-spacing:1.0px">25</i><b style="width:6.00px">/</b><i style="letter-spacing:1.0px">1427</i></span>
<span style="left:213.3px;top:666.00px;font-size:12px;line-height:12px;"><i style="letter-spacing:1.0px">24</i><b style="width:6.00px">/</b><i style="letter-spacing:1.0px">09</i></span>
<span style="left:301.0px;top:666.00px;font-size:12px;line-height:12px;"><u style="width:97.3px;transform:scaleX(0.890)">BIF BIAYA TXN KE </u><i style="letter-spacing:1.0px">008</i><u style="width:141.3px;transform:scaleX(0.887)">DARA BANCA INDONESKBB</u></span>
<span style="left:1122.2px;top:666.00px;font-size:11.5px;line-height:11.5px;letter-spacing:0.72px;">2.500,00</span>
<span style="left:1207.5px;top:666.00px;font-size:12.3px;line-height:12.3px;letter-spacing:0.50px;">688.869.064</span>
<span class="t" style="left:1301.0px;top:666.00px;font-size:12px;line-height:12px;font-family:'Liberation Serif',serif;">1000.03</span>
<span class="t" style="left:1390.8px;top:666.00px;font-size:12px;line-height:12px;font-family:'Liberation Serif',serif;">7200.02</span>
<span class="t" style="left:1460.0px;top:665.00px;font-size:13px;line-height:13px;letter-spacing:-0.07px;font-family:'Liberation Serif',serif;max-width:224px;overflow:hidden;">Biaya Adm - Biaya Adm Bank &amp; Buku Cek</span>
<span class="t" style="left:1687.0px;top:665.00px;font-size:13px;line-height:13px;font-family:'Liberation Serif',serif;">Biaya Adm</span>
<span class="t" style="left:1873.0px;top:665.00px;font-size:13px;line-height:13px;font-family:'Liberation Serif',serif;">Biaya Adm Bank</span>
<div class="gl" style="left:1278px;top:679px;width:84px"></div>
<div class="gl" style="left:1458px;top:679px;width:226px"></div>
<div class="gl" style="left:1870px;top:679px;width:29px"></div>
<div style="left:0px;top:696px;width:32px;height:1px;background:#c3c3c3;"></div>
<span class="rh" style="left:3.2px;top:683.00px;font-size:12.6px;line-height:12.6px;letter-spacing:-0.11px;">1426</span>
<span class="a" style="left:40.3px;top:683.00px;font-size:12.2px;line-height:12.2px;letter-spacing:-0.10px;">1220</span>
<span style="left:81.8px;top:683.00px;font-size:12px;line-height:12px;"><u style="width:20.5px;transform:scaleX(0.831)">BCA</u><b style="width:6.00px">/</b><u style="width:39.2px;transform:scaleX(0.865)">WARNA</u><b style="width:6.00px">/</b><i style="letter-spacing:1.0px">25</i><b style="width:6.00px">/</b><i style="letter-spacing:1.0px">1428</i></span>
<span style="left:213.3px;top:683.00px;font-size:12px;line-height:12px;"><i style="letter-spacing:1.0px">24</i><b style="width:6.00px">/</b><i style="letter-spacing:1.0px">09</i><b style="width:6.00px">/</b><i style="letter-spacing:1.0px">2025</i></span>
<span style="left:301.0px;top:683.00px;font-size:12px;line-height:12px;"><i style="letter-spacing:1.0px">2409</i><b style="width:6.00px">/</b><u style="width:33.4px;transform:scaleX(0.894)">FTSCY</u><b style="width:6.00px">/</b><u style="width:17.4px;transform:scaleX(0.967)">WS</u><i style="letter-spacing:0.9px">95031960000.00</i><u style="width:98.6px;transform:scaleX(0.902)">ADHISTY DESITA R</u></span>
<span style="left:950.3px;top:683.00px;font-size:11.5px;line-height:11.5px;letter-spacing:0.82px;">960.000,00</span>
<span style="left:1207.5px;top:683.00px;font-size:12.3px;line-height:12.3px;letter-spacing:0.50px;">689.829.064</span>
<span class="t" style="left:1301.0px;top:683.00px;font-size:12px;line-height:12px;font-family:'Liberation Serif',serif;">1000.03</span>
<span class="t" style="left:1390.8px;top:683.00px;font-size:12px;line-height:12px;font-family:'Liberation Serif',serif;">4000.01</span>
<span class="t" style="left:1460.0px;top:682.00px;font-size:13px;line-height:13px;font-family:'Liberation Serif',serif;max-width:224px;overflow:hidden;"> - Penjualan</span>
<span class="t" style="left:1873.0px;top:682.00px;font-size:13px;line-height:13px;font-family:'Liberation Serif',serif;">Penjualan</span>
<div class="gl" style="left:1278px;top:696px;width:84px"></div>
<div class="gl" style="left:1458px;top:696px;width:226px"></div>
<div class="gl" style="left:1870px;top:696px;width:29px"></div>
<div style="left:0px;top:713px;width:32px;height:1px;background:#c3c3c3;"></div>
<span class="rh" style="left:3.2px;top:700.00px;font-size:12.6px;line-height:12.6px;letter-spacing:-0.11px;">1427</span>
<span class="a" style="left:40.4px;top:700.00px;font-size:12.2px;line-height:12.2px;letter-spacing:-0.14px;">1267</span>
<span style="left:81.8px;top:700.00px;font-size:12px;line-height:12px;"><u style="width:20.5px;transform:scaleX(0.831)">BCA</u><b style="width:6.00px">/</b><u style="width:39.2px;transform:scaleX(0.865)">WARNA</u><b style="width:6.00px">/</b><i style="letter-spacing:1.0px">25</i><b style="width:6.00px">/</b><i style="letter-spacing:1.0px">1429</i></span>
<span style="left:213.3px;top:700.00px;font-size:12px;line-height:12px;"><i style="letter-spacing:1.0px">24</i><b style="width:6.00px">/</b><i style="letter-spacing:1.0px">09</i></span>
<span style="left:301.0px;top:700.00px;font-size:12px;line-height:12px;"><i style="letter-spacing:1.0px">2409</i><b style="width:6.00px">/</b><u style="width:32.5px;transform:scaleX(0.855)">FTFVA</u><b style="width:6.00px">/</b><u style="width:17.4px;transform:scaleX(0.967)">WS</u><i style="letter-spacing:1.0px">9505112608</i><b style="width:6.00px">/</b><u style="width:43.8px;transform:scaleX(0.966)">SHOPEE</u>-- <i style="letter-spacing:1.0px">8211956413</i></span>
<span style="left:1099.2px;top:700.00px;font-size:11.5px;line-height:11.5px;letter-spacing:0.72px;">2.282.500,00</span>
<span style="left:1207.7px;top:700.00px;font-size:12.3px;line-height:12.3px;letter-spacing:0.48px;">687.546.564</span>
<span class="t" style="left:1301.0px;top:700.00px;font-size:12px;line-height:12px;font-family:'Liberation Serif',serif;">1000.03</span>
<span class="t" style="left:1390.8px;top:700.00px;font-size:12px;line-height:12px;font-family:'Liberation Serif',serif;">5000.01</span>
<span class="t" style="left:1460.0px;top:699.00px;font-size:13px;line-height:13px;font-family:'Liberation Serif',serif;max-width:224px;overflow:hidden;"> -</span>
<div class="gl" style="left:1278px;top:713px;width:84px"></div>
<div class="gl" style="left:1458px;top:713px;width:226px"></div>
<div style="left:0px;top:730px;width:32px;height:1px;background:#c3c3c3;"></div>
<span class="rh" style="left:3.2px;top:717.00px;font-size:12.6px;line-height:12.6px;letter-spacing:-0.11px;">1428</span>
<span class="a" style="left:40.3px;top:717.00px;font-size:12.2px;line-height:12.2px;letter-spacing:-0.10px;">1220</span>
<span style="left:81.8px;top:717.00px;font-size:12px;line-height:12px;"><u style="width:20.5px;transform:scaleX(0.831)">BCA</u><b style="width:6.00px">/</b><u style="width:39.2px;transform:scaleX(0.865)">WARNA</u><b style="width:6.00px">/</b><i style="letter-spacing:1.0px">25</i><b style="width:6.00px">/</b><i style="letter-spacing:1.0px">1430</i></span>
<span style="left:213.3px;top:717.00px;font-size:12px;line-height:12px;"><i style="letter-spacing:1.0px">24</i><b style="width:6.00px">/</b><i style="letter-spacing:1.0px">09</i><b style="width:6.00px">/</b><i style="letter-spacing:1.0px">2025</i></span>
<span style="left:301.0px;top:717.00px;font-size:12px;line-height:12px;"><i style="letter-spacing:1.0px">2409</i><b style="width:6.00px">/</b><u style="width:33.4px;transform:scaleX(0.894)">FTSCY</u><b style="width:6.00px">/</b><u style="width:17.4px;transform:scaleX(0.967)">WS</u><i style="letter-spacing:0.9px">95031215000.00</i><u style="width:115.2px;transform:scaleX(0.877)">NOVAN ADI PRIYATNA</u></span>
<span style="left:950.3px;top:717.00px;font-size:11.5px;line-height:11.5px;letter-spacing:0.82px;">215.000,00</span>
<span style="left:1207.9px;top:717.00px;font-size:12.3px;line-height:12.3px;letter-spacing:0.46px;">687.761.564</span>
<span class="t" style="left:1301.0px;top:717.00px;font-size:12px;line-height:12px;font-family:'Liberation Serif',serif;">1000.03</span>
<span class="t" style="left:1390.8px;top:717.00px;font-size:12px;line-height:12px;font-family:'Liberation Serif',serif;">2100.02</span>
<span class="t" style="left:1460.0px;top:716.00px;font-size:13px;line-height:13px;letter-spacing:0.05px;font-family:'Liberation Serif',serif;max-width:224px;overflow:hidden;">Novan Adi Priyatna - Hutang Direksi</span>
<span class="t" style="left:1687.0px;top:716.00px;font-size:13px;line-height:13px;letter-spacing:0.16px;font-family:'Liberation Serif',serif;">Novan Adi Priyatna</span>
<span class="t" style="left:1873.0px;top:716.00px;font-size:13px;line-height:13px;font-family:'Liberation Serif',serif;">Hutang Direksi</span>
<div class="gl" style="left:1278px;top:730px;width:84px"></div>
<div class="gl" style="left:1458px;top:730px;width:226px"></div>
<div class="gl" style="left:1870px;top:730px;width:29px"></div>
<div style="left:0px;top:747px;width:32px;height:1px;background:#c3c3c3;"></div>
<span class="rh" style="left:3.2px;top:734.00px;font-size:12.6px;line-height:12.6px;letter-spacing:-0.11px;">1429</span>
<span class="a" style="left:40.3px;top:734.00px;font-size:12.2px;line-height:12.2px;letter-spacing:-0.10px;">1220</span>
<span style="left:81.8px;top:734.00px;font-size:12px;line-height:12px;"><u style="width:20.5px;transform:scaleX(0.831)">BCA</u><b style="width:6.00px">/</b><u style="width:39.2px;transform:scaleX(0.865)">WARNA</u><b style="width:6.00px">/</b><i style="letter-spacing:1.0px">25</i><b style="width:6.00px">/</b><i style="letter-spacing:1.0px">1431</i></span>
<span style="left:213.3px;top:734.00px;font-size:12px;line-height:12px;"><i style="letter-spacing:1.0px">24</i><b style="width:6.00px">/</b><i style="letter-spacing:1.0px">09</i><b style="width:6.00px">/</b><i style="letter-spacing:1.0px">2025</i></span>
<span style="left:301.0px;top:734.00px;font-size:12px;line-height:12px;"><u style="width:96.1px;transform:scaleX(0.909)">BIF TRANSFER DR </u><i style="letter-spacing:1.0px">008</i><u style="width:143.4px;transform:scaleX(0.885)">MUHAMMAD ABDUL HALIM</u></span>
<span style="left:950.3px;top:734.00px;font-size:11.5px;line-height:11.5px;letter-spacing:0.82px;">500.000,00</span>
<span style="left:1207.5px;top:734.00px;font-size:12.3px;line-height:12.3px;letter-spacing:0.50px;">688.261.564</span>
<span class="t" style="left:1301.0px;top:734.00px;font-size:12px;line-height:12px;font-family:'Liberation Serif',serif;">1000.03</span>
<span class="t" style="left:1390.8px;top:734.00px;font-size:12px;line-height:12px;font-family:'Liberation Serif',serif;">4000.01</span>
<span class="t" style="left:1460.0px;top:733.00px;font-size:13px;line-height:13px;font-family:'Liberation Serif',serif;max-width:224px;overflow:hidden;"> - Penjualan</span>
<span class="t" style="left:1873.0px;top:733.00px;font-size:13px;line-height:13px;font-family:'Liberation Serif',serif;">Penjualan</span>
<div class="gl" style="left:1278px;top:747px;width:84px"></div>
<div class="gl" style="left:1458px;top:747px;width:226px"></div>
<div class="gl" style="left:1870px;top:747px;width:29px"></div>
<div style="left:1457px;top:458px;width:228px;height:18px;border:1px solid #d0d0d0;"></div>
<div style="left:209px;top:202px;width:91px;height:20px;border:2px solid #217346;"></div>
<div style="left:295px;top:217px;width:7px;height:7px;background:#217346;border:1px solid #fff;"></div>
<div style="left:301px;top:222px;width:19px;height:19px;background:#fff;border:1px solid #c6c6c6;"></div>
<svg style="left:303px;top:224px;" width="15" height="15" viewBox="0 0 15 15"><rect x="1.500" y="1.500" width="4.500" height="3.500" fill="#4a7ebb" stroke="#4a7ebb" stroke-width="1"/><path d="M6 1.500h5.500v3.500H6 M1.500 5v4h4.500V5" fill="#fff" stroke="#8a8a8a" stroke-width="1"/><path d="M1 11.500h5.500" stroke="#8a8a8a" stroke-width="1" stroke-dasharray="1 1"/><path d="M10.500 8v5 M8 10.500h5" stroke="#8a8a8a" stroke-width="1"/></svg>
</div>
<div style="left:1899px;top:247px;width:21px;height:735px;background:#f0f0f0;"></div>
<div style="left:1918px;top:247px;width:2px;height:735px;background:#e9e9e9;"></div>
<div style="left:1898px;top:247px;width:1px;height:735px;background:#b9b9b9;"></div>
<div style="left:1902px;top:229px;width:15px;height:15px;background:#fff;border:1px solid #ababab;"></div>
<svg style="left:1905.5px;top:233.5px;" width="8" height="5" viewBox="0 0 8 5"><path d="M0 4.500h8L4 .3z" fill="#222"/></svg>
<div style="left:1902px;top:967px;width:15px;height:15px;background:#fff;border:1px solid #ababab;"></div>
<svg style="left:1905.5px;top:972.5px;" width="8" height="5" viewBox="0 0 8 5"><path d="M0 .3h8L4 4.500z" fill="#222"/></svg>
<div style="left:1902px;top:821px;width:15px;height:15px;background:#fff;border:1px solid #ababab;"></div>
<div style="left:0px;top:982px;width:1920px;height:1px;background:#b4b4b4;"></div>
<div id="sheettabs" style="left:0;top:983px;width:1920px;height:27px;background:#e6e6e6">
<div style="left:1166px;top:0px;width:754px;height:27px;background:#f0f0f0;"></div>
<div style="left:140px;top:-1px;width:41px;height:25px;background:#fff;border-bottom:2px solid #217346;border-left:1px solid #c9c9c9;border-right:1px solid #c9c9c9"></div>
<svg style="left:25px;top:8px;" width="6" height="9" viewBox="0 0 6 9"><path d="M5.500 0v8.500L.5 4.200z" fill="#c6c6c6"/></svg>
<svg style="left:55px;top:8px;" width="6" height="9" viewBox="0 0 6 9"><path d="M.5 0v8.500l5-4.300z" fill="#c6c6c6"/></svg>
<span style="left:111.3px;top:7.00px;font-size:12.901px;line-height:12.901px;letter-spacing:-1.22px;color:#505050;">RK</span>
<span style="left:153.0px;top:7.00px;font-size:12.635px;line-height:12.635px;letter-spacing:-0.42px;font-weight:700;color:#217346;">rk</span>
<span style="left:197.7px;top:7.00px;font-size:12.901px;line-height:12.901px;letter-spacing:-0.18px;color:#505050;">FPK-PT Warna Media Packaging</span>
<span style="left:418.3px;top:7.00px;font-size:12.901px;line-height:12.901px;letter-spacing:-0.10px;color:#505050;">FPM-PT Warna Media Packaging</span>
<span style="left:638.6px;top:7.00px;font-size:12.901px;line-height:12.901px;letter-spacing:-0.20px;color:#505050;">Sheet4</span>
<span style="left:708.7px;top:7.00px;font-size:12.901px;line-height:12.901px;letter-spacing:0.10px;color:#505050;">Bukti Potong Unifikasi</span>
<div style="left:100px;top:5px;width:1px;height:17px;background:#a6a6a6;"></div>
<div style="left:401px;top:5px;width:1px;height:17px;background:#a6a6a6;"></div>
<div style="left:626px;top:5px;width:1px;height:17px;background:#a6a6a6;"></div>
<div style="left:691px;top:5px;width:1px;height:17px;background:#a6a6a6;"></div>
<div style="left:853px;top:5px;width:1px;height:17px;background:#a6a6a6;"></div>
<svg style="left:887.5px;top:5px;" width="16" height="16" viewBox="0 0 16 16"><circle cx="8" cy="8" r="7.200" fill="none" stroke="#767676" stroke-width="1.200"/><path d="M8 4.200v7.600 M4.200 8h7.600" stroke="#767676" stroke-width="1.400"/></svg>
<div style="left:1152.3px;top:9px;width:1.5px;height:1.5px;background:#999;"></div>
<div style="left:1152.3px;top:13px;width:1.5px;height:1.5px;background:#999;"></div>
<div style="left:1152.3px;top:17px;width:1.5px;height:1.5px;background:#999;"></div>
<div style="left:1169.5px;top:6.6px;width:14px;height:14px;background:#fff;border:1px solid #ababab;"></div>
<svg style="left:1173.5px;top:9.6px;" width="6" height="9" viewBox="0 0 6 9"><path d="M5 0v8L.5 4z" fill="#222"/></svg>
<div style="left:1184px;top:6.6px;width:484px;height:14px;background:#fff;border:1px solid #ababab;"></div>
<div style="left:1884.4px;top:6.6px;width:14px;height:14px;background:#fff;border:1px solid #ababab;"></div>
<svg style="left:1889px;top:9.6px;" width="6" height="9" viewBox="0 0 6 9"><path d="M.5 0v8L5 4z" fill="#222"/></svg>
</div>
<div id="status" style="left:0;top:1010px;width:1920px;height:22px;background:#f3f2f1">
<span style="left:8.0px;top:6.00px;font-size:11.155px;line-height:11.155px;letter-spacing:-0.31px;color:#444;">Ready</span>
<svg style="left:57.5px;top:4px;" width="14" height="14" viewBox="0 0 14 14"><circle cx="6" cy="2.200" r="1.500" fill="none" stroke="#444" stroke-width="1"/><path d="M1 5.200l3.500.8h3l3.500-.8 M4.500 6v3.500L2.800 13 M7.500 6v3.500l1.200 2" fill="none" stroke="#444" stroke-width="1.100"/><path d="M8.500 9.500l4.500 4 M13 9.500l-4.500 4" stroke="#444" stroke-width="1.100"/></svg>
<span style="left:76.0px;top:6.00px;font-size:11.2px;line-height:11.2px;letter-spacing:0.04px;color:#444;">Accessibility: Investigate</span>
<div style="left:1620px;top:0px;width:40px;height:22px;background:#d2d0ce;"></div>
<svg style="left:1633px;top:4.4px;" width="13" height="13" viewBox="0 0 13 13"><path d="M.6.600h11.800v11.800H.6z M.6 4.500h11.800 M.6 8.500h11.800 M4.500.6v11.800 M8.500.6v11.800" fill="none" stroke="#3b3a39" stroke-width="1.100"/></svg>
<svg style="left:1673px;top:4.4px;" width="14" height="13" viewBox="0 0 14 13"><path d="M.6.600h12.800v11.800H.6z M3.600 3.400h6.800v6.200H3.600z M5 5.400h4 M5 7.400h4" fill="none" stroke="#3b3a39" stroke-width="1.100"/></svg>
<svg style="left:1713px;top:4.4px;" width="14" height="13" viewBox="0 0 14 13"><path d="M.6.600h12.800v11.800H.6z M4.500.6v5.500h5.500V.6 M.6 6.100h12.800" fill="none" stroke="#3b3a39" stroke-width="1.100"/></svg>
<div style="left:1745.6px;top:10px;width:7.5px;height:1.1px;background:#555;"></div>
<div style="left:1759px;top:10px;width:99.5px;height:1px;background:#666;"></div>
<div style="left:1807px;top:6px;width:4.6px;height:10.6px;background:#3b3a39;"></div>
<div style="left:1864px;top:10px;width:7.6px;height:1.1px;background:#555;"></div>
<div style="left:1867.3px;top:6.7px;width:1.1px;height:7.6px;background:#555;"></div>
<span style="left:1886.0px;top:6.00px;font-size:10.67px;line-height:10.67px;letter-spacing:-0.21px;color:#444;">100%</span>
</div>
<div id="taskbar" style="left:0;top:1032px;width:1920px;height:48px;background:linear-gradient(90deg,#e5e7be 0px,#e6e8bd 100px,#dfe3c3 270px,#e3e7b5 370px,#ebe5a9 440px,#e8e7b5 540px,#ebe8bd 640px,#efe6cb 800px,#eedfd1 900px,#ecdad4 980px,#e9dcd6 1150px,#e9e0cf 1290px,#ebdad3 1360px,#ecdccf 1480px,#e9dfc8 1530px,#ebdcd0 1600px,#ecd8da 1680px,#efd5e3 1750px,#efd6e0 1890px,#ecdccc 1915px)">
<div style="left:0px;top:0px;width:1920px;height:1px;background:rgba(255,255,255,.35);"></div>
<svg style="left:18.5px;top:13px;" width="25" height="17" viewBox="0 0 25 17"><path d="M5.500 15.500c-3 0-4.800-1.900-4.800-4.200 0-2.200 1.700-3.900 3.900-4.100C5.300 3.500 8 1 11.400 1c3.300 0 6 2.300 6.700 5.400 3 .1 5.400 2.100 5.400 4.700 0 2.500-2.200 4.400-5 4.400z" fill="#b5d6f6" stroke="#8dbbea" stroke-width="1"/></svg>
<div style="left:30.2px;top:6.3px;width:15.4px;height:15.4px;background:#d32f2f;border-radius:8px;box-shadow:0 0 0 1px #f6d9c8"></div>
<span style="left:34.9px;top:10.00px;font-size:11px;line-height:11px;font-weight:700;color:#fff;">2</span>
<span style="left:50.7px;top:10.00px;font-size:11.64px;line-height:11.64px;letter-spacing:-0.36px;color:#1b1b1b;">26°C</span>
<span style="left:50.7px;top:26.00px;font-size:11.64px;line-height:11.64px;letter-spacing:-0.21px;color:#5c5c48;">Berawan</span>
<svg style="left:638.7px;top:13px;" width="24" height="23" viewBox="0 0 24 23"><defs><linearGradient id="wg" x1="0" y1="0" x2="1" y2="1"><stop offset="0" stop-color="#3cc0f5"/><stop offset="1" stop-color="#0a6ed1"/></linearGradient></defs><path d="M0 0h11.200v10.900H0z M12.300 0h11.200v10.900H12.300z M0 12h11.200v10.900H0z M12.300 12h11.200v10.900H12.300z" fill="url(#wg)"/></svg>
<div style="left:676.3px;top:8.3px;width:216.5px;height:31.3px;background:rgba(250,247,238,.85);border:1px solid #e6e0cf;border-radius:16px"></div>
<svg style="left:687.5px;top:16.7px;" width="15" height="16" viewBox="0 0 15 16"><circle cx="6.300" cy="6.300" r="5.300" fill="none" stroke="#262626" stroke-width="1.700"/><path d="M10 10.300l4 4.400" stroke="#262626" stroke-width="1.900" stroke-linecap="round"/></svg>
<span style="left:712.3px;top:18.00px;font-size:13.58px;line-height:13.58px;letter-spacing:-0.40px;color:#5f5f5f;">Search</span>
<svg style="left:847px;top:11px;" width="36" height="26" viewBox="0 0 36 26"><ellipse cx="18" cy="24" rx="16" ry="1.800" fill="#e8cfa8"/><path d="M2.500 8.500c.5-3 2.500-5.500 5-6l1.500-1.500.5 2c2 1 3 3 4 5h10c3 0 4.500 2 4.500 5v9h-2v-7l-3 .5v6.500h-2v-6.500H13v6.500h-2V15c-2-1-3-3-3.300-5L5 11z" fill="#f2f2f4" stroke="#3a3a4a" stroke-width=".9"/><path d="M9 4l2 5 M11 6l2.500 4 M15 8.500l-1 6 M18 8.500l-.5 6 M21 8.500v6 M24 8.500l.5 6 M27 10l-1 4 M12 16v5 M22 16v5 M27 16v5" stroke="#3a3a4a" stroke-width="1"/><path d="M28 9.500c2.500 1.500 3 5 3.500 8" fill="none" stroke="#3a3a4a" stroke-width="1.200"/></svg>
<div style="left:915px;top:13px;width:14.5px;height:14.5px;background:#f4f4f4;border-radius:2px;box-shadow:0 0 1px #bbb"></div>
<div style="left:907px;top:19px;width:15.5px;height:15.5px;background:#2a2a2a;border-radius:2px"></div>
<div style="left:913px;top:19px;width:9.5px;height:9.5px;background:#c8c8c8;"></div>
<svg style="left:951px;top:12.5px;" width="25" height="24" viewBox="0 0 25 24"><defs><linearGradient id="cp" x1="0" y1="0" x2="1" y2="1"><stop offset="0" stop-color="#7fd04f"/><stop offset=".25" stop-color="#2f9bf0"/><stop offset=".55" stop-color="#b255e2"/><stop offset=".8" stop-color="#f0607a"/><stop offset="1" stop-color="#f59a3a"/></linearGradient></defs><path d="M7 2h9c2 0 3.300 1 4 3l3.500 9c.8 2.500-.5 4.500-3 4.500h-2l-1 2c-.8 1.500-2 2-3.500 2H5c-2.500 0-4-2-3.200-4.500l1-3C1 13 .5 11 1.200 9L3 4.500C3.700 2.800 5 2 7 2z" fill="url(#cp)"/><path d="M10.500 7l-3 10.500h4.500l3-10.500z" fill="#fff" opacity=".85"/></svg>
<svg style="left:994px;top:13px;" width="26" height="23" viewBox="0 0 26 23"><path d="M1 3.500C1 2 2 1 3.500 1h6l2.500 3H1z" fill="#e9a820"/><path d="M1 4h22.500c1.200 0 2 .8 2 2v13.500c0 1.200-.8 2-2 2H3c-1.200 0-2-.8-2-2z" fill="#fbd04f"/><path d="M5.500 21.500v-4c0-1 .7-1.700 1.700-1.700h11.600c1 0 1.700.7 1.700 1.700v4z" fill="#1b84dc"/></svg>
<div style="left:1003.7px;top:40.5px;width:6px;height:2.5px;background:#8a8a8a;border-radius:1.500px"></div>
<svg style="left:1039px;top:13px;" width="25" height="25" viewBox="0 0 25 25"><defs><linearGradient id="eg" x1="0" y1="0" x2="1" y2="1"><stop offset="0" stop-color="#2bc3d2"/><stop offset=".5" stop-color="#1a80d6"/><stop offset="1" stop-color="#114a9c"/></linearGradient></defs><circle cx="12.500" cy="12.500" r="12" fill="url(#eg)"/><path d="M2 9C4 3 10 .5 16 2c5 1.500 8 5.500 8 10-2-4-6-5.500-10-5C9.500 7.500 7 10 7 13c-2.500-1-4.500-2.500-5-4z" fill="#5bd672" opacity=".85"/><circle cx="8" cy="15" r="3.200" fill="#e8e8e8"/><path d="M3 23c.5-3.500 2.500-5 5-5s4.500 1.500 5 5z" fill="#e8e8e8"/></svg>
<svg style="left:1083px;top:12px;" width="25" height="26" viewBox="0 0 25 26"><path d="M7.500 5.500V4c0-1.500 1-2.500 2.500-2.500h5c1.500 0 2.500 1 2.500 2.500v1.500" fill="none" stroke="#2b9be8" stroke-width="1.800"/><path d="M.8 5.500h23.400v15c0 2-1.200 3.500-3.500 3.500H4.300C2 24 .8 22.500.8 20.500z" fill="#0f5bb5"/><path d="M7.500 9.500h4.500v4.500H7.500z" fill="#f25022"/><path d="M13 9.500h4.500v4.500H13z" fill="#7fba00"/><path d="M7.500 15h4.500v4.500H7.500z" fill="#00a4ef"/><path d="M13 15h4.500v4.500H13z" fill="#ffb900"/></svg>
<svg style="left:1127.5px;top:13px;" width="24" height="24" viewBox="0 0 24 24"><circle cx="12" cy="12" r="12" fill="#e5364e"/><path d="M6.500 17L12 6l5.500 11" fill="none" stroke="#fff" stroke-width="2.300" stroke-linejoin="round"/></svg>
<div style="left:1136.5px;top:40.5px;width:6px;height:2.5px;background:#8a8a8a;border-radius:1.500px"></div>
<svg style="left:1170.5px;top:13px;" width="25" height="25" viewBox="0 0 25 25"><path d="M12.500 1.500c6 0 10.500 4.500 10.500 10.300S18.500 22 12.500 22c-1.900 0-3.700-.5-5.300-1.300L1.800 22.500l1.600-5.200C2.500 15.700 2 13.800 2 11.800 2 6 6.500 1.500 12.500 1.500z" fill="#f4f1e6" stroke="#2aa566" stroke-width="2.200"/><path d="M8.500 7.500c.5-.5 1.300-.4 1.600.2l.8 1.700c.2.400.1.900-.2 1.200l-.6.600c.8 1.600 1.900 2.700 3.500 3.500l.6-.6c.3-.3.800-.4 1.200-.2l1.700.8c.6.300.7 1.100.2 1.600-1 1-2.500 1.300-3.900.7-3-1.200-5.200-3.400-6.400-6.400-.5-1.400-.2-2.500.5-3.100z" fill="#2aa566"/></svg>
<div style="left:1184px;top:7px;width:15.6px;height:15.6px;background:#0b7ad1;border-radius:8px;box-shadow:0 0 0 1px #e8e0da"></div>
<span style="left:1188.9px;top:10.00px;font-size:10.5px;line-height:10.5px;font-weight:700;color:#fff;">8</span>
<svg style="left:1215px;top:14.5px;" width="24" height="19" viewBox="0 0 24 19"><rect width="24" height="19" rx="1.500" fill="#343434"/><rect width="24" height="3" rx="1" fill="#555"/><path d="M4 7l4 3.500L4 14" fill="none" stroke="#fff" stroke-width="1.700"/><path d="M10 14.500h6" stroke="#fff" stroke-width="1.700"/></svg>
<div style="left:1224px;top:40.5px;width:6px;height:2.5px;background:#8a8a8a;border-radius:1.500px"></div>
<div style="left:1252px;top:5px;width:38.5px;height:38.5px;background:rgba(255,253,245,.6);border:1px solid rgba(255,255,255,.5);border-radius:5px"></div>
<svg style="left:1258.5px;top:13.5px;" width="25" height="23" viewBox="0 0 25 23"><path d="M8 0h15.500c.8 0 1.500.7 1.500 1.500V21.500c0 .8-.7 1.500-1.500 1.500H8z" fill="#21a366"/><path d="M16.500 0h7c.8 0 1.500.7 1.500 1.500V6h-8.500z" fill="#33c481"/><path d="M16.500 6H25v5.500h-8.500z" fill="#21a366"/><path d="M16.500 11.500H25V17h-8.500z" fill="#107c41"/><path d="M8 11.500h8.500V17H8z" fill="#185c37"/><path d="M8 0h8.500v6H8z" fill="#21a366"/><path d="M8 6h8.500v5.500H8z" fill="#107c41"/><path d="M16.500 17H25v4.500c0 .8-.7 1.500-1.500 1.500h-7z" fill="#185c37"/><rect x="0" y="5" width="13" height="13" rx="1.200" fill="#107c41"/><path d="M3.600 8l5.800 7 M9.400 8l-5.800 7" stroke="#fff" stroke-width="1.900"/></svg>
<div style="left:1263.4px;top:40.7px;width:15.6px;height:2.5px;background:#1a73d9;border-radius:1.500px"></div>
<svg style="left:1752.8px;top:21px;" width="11" height="7" viewBox="0 0 11 7"><path d="M.8 6l4.600-4.800L10 6" fill="none" stroke="#262626" stroke-width="1.600"/></svg>
<svg style="left:1782px;top:16px;" width="17" height="17" viewBox="0 0 17 17"><path d="M.8 1h10.500 M.8 1v9.500h9 M5.500 10.500v3 M2.500 14.800h8" fill="none" stroke="#1f1f1f" stroke-width="1.400"/><rect x="11.800" y=".8" width="3.400" height="4.800" rx="1" fill="none" stroke="#1f1f1f" stroke-width="1.300"/><path d="M13.500 5.600v9.800" stroke="#1f1f1f" stroke-width="1.300"/></svg>
<svg style="left:1806px;top:17.5px;" width="18" height="14" viewBox="0 0 18 14"><path d="M.8 4.500h2.700L7 1.200v11.300L3.500 9.200H.8z" fill="none" stroke="#1f1f1f" stroke-width="1.200" stroke-linejoin="round"/><path d="M9.200 4.300c1.300 1.500 1.300 3.600 0 5.100 M11.500 2.500c2.300 2.500 2.300 6.200 0 8.700 M13.800.8c3.200 3.500 3.200 8.600 0 12.100" fill="none" stroke="#1f1f1f" stroke-width="1.200"/></svg>
<span style="left:1872.5px;top:10.00px;font-size:11.64px;line-height:11.64px;letter-spacing:-0.20px;color:#1f1f1f;">10:14</span>
<span style="left:1840.6px;top:26.00px;font-size:11.64px;line-height:11.64px;letter-spacing:0.21px;color:#1f1f1f;">31/01/2026</span>
</div>
</body></html>
